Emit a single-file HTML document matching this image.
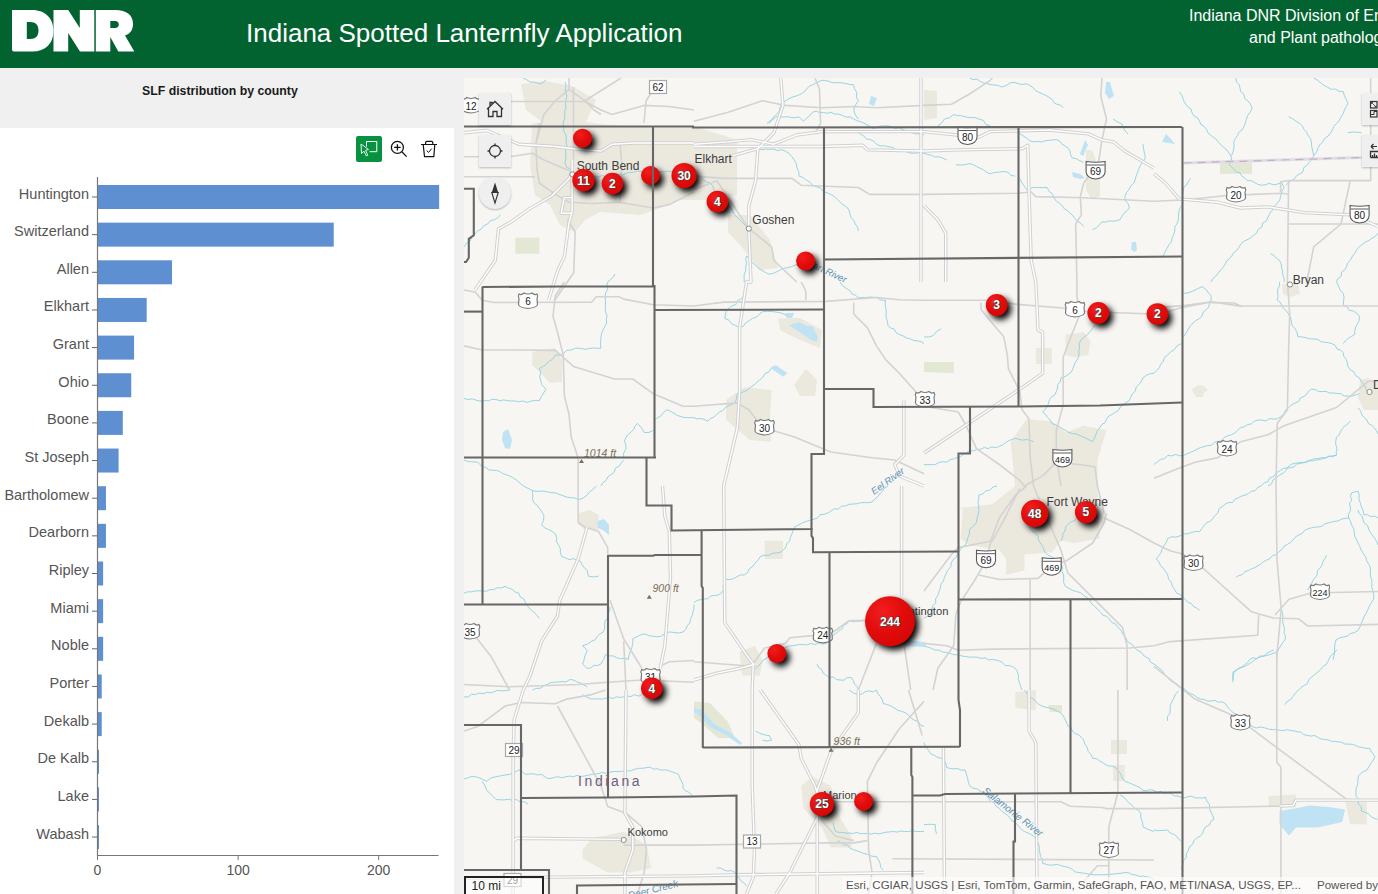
<!DOCTYPE html>
<html><head><meta charset="utf-8">
<style>
*{margin:0;padding:0;box-sizing:border-box}
html,body{width:1378px;height:894px;overflow:hidden;background:#f0f0f0;font-family:"Liberation Sans",sans-serif}
#hdr{position:absolute;left:0;top:0;width:1378px;height:68px;background:#036330;color:#fff}
#title{position:absolute;left:246px;top:17.8px;font-size:26px;white-space:nowrap}
.hr{position:absolute;font-size:16px;white-space:nowrap}
#ptitle{position:absolute;left:142px;top:83.5px;font-size:12.3px;font-weight:bold;color:#1a1a1a;white-space:nowrap}
#panel{position:absolute;left:0;top:128px;width:454px;height:766px;background:#fff}
#map{position:absolute;left:464px;top:78px;width:914px;height:816px;overflow:hidden;background:#f5f4ef}
.lbl{position:absolute;font-size:14.5px;color:#555;white-space:nowrap;text-align:right;width:90px;left:-1px}
.ax{position:absolute;font-size:14px;color:#555;white-space:nowrap}
.btn{position:absolute;width:32px;height:32px;background:#efefef;box-shadow:0 1px 2px rgba(0,0,0,.25)}
</style></head><body>
<div id="hdr">
  <svg style="position:absolute;left:12px;top:10px" width="124" height="43" viewBox="0 0 124 43">
    <g fill="#fff">
      <path d="M0,0 L20,0 C34,0 41.5,9 41.5,20.8 C41.5,33 34,41.6 20,41.6 L2,41.6 Q0,41.6 0,39.6 Z M14.8,11.9 L14.8,29 L18,29 C24,29 26.5,25.5 26.5,20.5 C26.5,15 24,11.9 18,11.9 Z" fill-rule="evenodd"/>
      <path d="M41.5,0 L56.2,0 L67.8,18 L67.8,0 L82.3,0 L82.3,41.6 L68,41.6 L56.2,23 L56.2,41.6 L41.5,41.6 Z"/>
      <path d="M83.8,0 L103,0 C115,0 121,5.5 121,14 C121,20 118,24 113,25.5 L122.3,41.6 L106.3,41.6 L98.3,27 L98.3,41.6 L83.8,41.6 Z M98.3,11 L98.3,18 L103,18 C105.5,18 106.8,16.8 106.8,14.5 C106.8,12.2 105.5,11 103,11 Z" fill-rule="evenodd"/>
    </g>
  </svg>
  <div id="title">Indiana Spotted Lanternfly Application</div>
  <div class="hr" style="left:1189px;top:7.2px">Indiana DNR Division of Entomology</div>
  <div class="hr" style="left:1249px;top:29.2px">and Plant pathology</div>
</div>
<div id="ptitle">SLF distribution by county</div>
<div id="panel"></div>
<div style="position:absolute;left:356px;top:136px;width:26px;height:26px;background:#06923f;border-radius:2px"></div>
<svg style="position:absolute;left:350px;top:130px" width="95" height="38" viewBox="350 130 95 38">
 <path d="M366.5,146.5 V141.5 H376.8 V151.7 H369.5" fill="none" stroke="#fff" stroke-width="1"/>
 <path d="M361,144 L368.5,149.5 L365.6,150.4 L367.8,155.2 L366.2,155.9 L364,151.2 L361.5,153.5 Z" fill="none" stroke="#fff" stroke-width="0.9" stroke-linejoin="round"/>
 <circle cx="397.4" cy="147.4" r="6" fill="none" stroke="#111" stroke-width="1.3"/>
 <path d="M394.2,147.4 H400.6 M397.4,144.2 V150.6 M401.8,151.8 L406.6,156.6" stroke="#111" stroke-width="1.3" fill="none"/>
 <path d="M421,144.5 H437 M425.6,144.5 V142.5 Q425.6,141.3 427,141.3 H431.5 Q432.8,141.3 432.8,142.5 V144.5 M423.2,144.5 L424.5,156.6 H433.8 L434.8,144.5" fill="none" stroke="#111" stroke-width="1.2" stroke-linejoin="round"/>
 <path d="M426.6,150.5 L428.6,152.4 L431.7,148.6" fill="none" stroke="#111" stroke-width="1"/>
</svg>
<div id="chart" style="position:absolute;left:0;top:0;width:454px;height:894px">
<svg style="position:absolute;left:0;top:0" width="454" height="894">
<rect x="97.5" y="185.00" width="341.66" height="24" fill="#5e8fd0"/>
<line x1="92" y1="197.00" x2="97.5" y2="197.00" stroke="#666" stroke-width="1"/>
<rect x="97.5" y="222.65" width="236.21" height="24" fill="#5e8fd0"/>
<line x1="92" y1="234.65" x2="97.5" y2="234.65" stroke="#666" stroke-width="1"/>
<rect x="97.5" y="260.30" width="74.52" height="24" fill="#5e8fd0"/>
<line x1="92" y1="272.30" x2="97.5" y2="272.30" stroke="#666" stroke-width="1"/>
<rect x="97.5" y="297.95" width="49.21" height="24" fill="#5e8fd0"/>
<line x1="92" y1="309.95" x2="97.5" y2="309.95" stroke="#666" stroke-width="1"/>
<rect x="97.5" y="335.60" width="36.56" height="24" fill="#5e8fd0"/>
<line x1="92" y1="347.60" x2="97.5" y2="347.60" stroke="#666" stroke-width="1"/>
<rect x="97.5" y="373.25" width="33.74" height="24" fill="#5e8fd0"/>
<line x1="92" y1="385.25" x2="97.5" y2="385.25" stroke="#666" stroke-width="1"/>
<rect x="97.5" y="410.90" width="25.31" height="24" fill="#5e8fd0"/>
<line x1="92" y1="422.90" x2="97.5" y2="422.90" stroke="#666" stroke-width="1"/>
<rect x="97.5" y="448.55" width="21.09" height="24" fill="#5e8fd0"/>
<line x1="92" y1="460.55" x2="97.5" y2="460.55" stroke="#666" stroke-width="1"/>
<rect x="97.5" y="486.20" width="8.44" height="24" fill="#5e8fd0"/>
<line x1="92" y1="498.20" x2="97.5" y2="498.20" stroke="#666" stroke-width="1"/>
<rect x="97.5" y="523.85" width="8.44" height="24" fill="#5e8fd0"/>
<line x1="92" y1="535.85" x2="97.5" y2="535.85" stroke="#666" stroke-width="1"/>
<rect x="97.5" y="561.50" width="5.62" height="24" fill="#5e8fd0"/>
<line x1="92" y1="573.50" x2="97.5" y2="573.50" stroke="#666" stroke-width="1"/>
<rect x="97.5" y="599.15" width="5.62" height="24" fill="#5e8fd0"/>
<line x1="92" y1="611.15" x2="97.5" y2="611.15" stroke="#666" stroke-width="1"/>
<rect x="97.5" y="636.80" width="5.62" height="24" fill="#5e8fd0"/>
<line x1="92" y1="648.80" x2="97.5" y2="648.80" stroke="#666" stroke-width="1"/>
<rect x="97.5" y="674.45" width="4.22" height="24" fill="#5e8fd0"/>
<line x1="92" y1="686.45" x2="97.5" y2="686.45" stroke="#666" stroke-width="1"/>
<rect x="97.5" y="712.10" width="4.22" height="24" fill="#5e8fd0"/>
<line x1="92" y1="724.10" x2="97.5" y2="724.10" stroke="#666" stroke-width="1"/>
<rect x="97.5" y="749.75" width="1.50" height="24" fill="#5e8fd0"/>
<line x1="92" y1="761.75" x2="97.5" y2="761.75" stroke="#666" stroke-width="1"/>
<rect x="97.5" y="787.40" width="1.50" height="24" fill="#5e8fd0"/>
<line x1="92" y1="799.40" x2="97.5" y2="799.40" stroke="#666" stroke-width="1"/>
<rect x="97.5" y="825.05" width="1.50" height="24" fill="#5e8fd0"/>
<line x1="92" y1="837.05" x2="97.5" y2="837.05" stroke="#666" stroke-width="1"/>
<line x1="97.5" y1="177" x2="97.5" y2="856" stroke="#777" stroke-width="1.2"/>
<line x1="97" y1="855.5" x2="438.5" y2="855.5" stroke="#777" stroke-width="1.2"/>
<line x1="97.5" y1="855" x2="97.5" y2="860" stroke="#777" stroke-width="1"/>
<line x1="238.1" y1="855" x2="238.1" y2="860" stroke="#777" stroke-width="1"/>
<line x1="378.7" y1="855" x2="378.7" y2="860" stroke="#777" stroke-width="1"/>
</svg>
<div class="lbl" style="top:185.50px">Huntington</div>
<div class="lbl" style="top:223.15px">Switzerland</div>
<div class="lbl" style="top:260.80px">Allen</div>
<div class="lbl" style="top:298.45px">Elkhart</div>
<div class="lbl" style="top:336.10px">Grant</div>
<div class="lbl" style="top:373.75px">Ohio</div>
<div class="lbl" style="top:411.40px">Boone</div>
<div class="lbl" style="top:449.05px">St Joseph</div>
<div class="lbl" style="top:486.70px">Bartholomew</div>
<div class="lbl" style="top:524.35px">Dearborn</div>
<div class="lbl" style="top:562.00px">Ripley</div>
<div class="lbl" style="top:599.65px">Miami</div>
<div class="lbl" style="top:637.30px">Noble</div>
<div class="lbl" style="top:674.95px">Porter</div>
<div class="lbl" style="top:712.60px">Dekalb</div>
<div class="lbl" style="top:750.25px">De Kalb</div>
<div class="lbl" style="top:787.90px">Lake</div>
<div class="lbl" style="top:825.55px">Wabash</div>
<div class="ax" style="left:67.5px;width:60px;text-align:center;top:862px">0</div>
<div class="ax" style="left:208.1px;width:60px;text-align:center;top:862px">100</div>
<div class="ax" style="left:348.7px;width:60px;text-align:center;top:862px">200</div>
</div>
<div id="map"><svg width="914" height="816" viewBox="464 78 914 816" style="position:absolute;left:0;top:0" font-family="Liberation Sans">
<defs><radialGradient id="rg" cx="0.35" cy="0.3" r="0.75"><stop offset="0" stop-color="#f21d1d"/><stop offset="0.55" stop-color="#e20c0c"/><stop offset="1" stop-color="#d60707"/></radialGradient><filter id="sh" x="-50%" y="-50%" width="200%" height="200%"><feGaussianBlur stdDeviation="3.3"/></filter></defs>
<rect x="464" y="78" width="914" height="816" fill="#f7f6f2"/>
<path d="M532.0,124.0 L560.0,118.0 L600.0,124.0 L655.0,128.0 L655.0,210.0 L640.0,215.0 L600.0,212.0 L585.0,220.0 L575.0,232.0 L560.0,225.0 L550.0,205.0 L535.0,195.0 L530.0,165.0Z" fill="#ebe8de"/>
<path d="M521.0,84.0 L545.0,81.0 L572.0,86.0 L596.0,100.0 L585.0,124.0 L545.0,124.0 L526.0,110.0Z" fill="#ebe8de"/>
<path d="M655.0,128.0 L700.0,128.0 L737.0,140.0 L737.0,195.0 L710.0,200.0 L680.0,200.0 L655.0,210.0Z" fill="#ebe8de"/>
<path d="M728.0,215.0 L750.0,215.0 L770.0,240.0 L778.0,268.0 L760.0,270.0 L740.0,245.0 L728.0,232.0Z" fill="#ebe8de"/>
<path d="M1086.0,150.0 L1092.0,150.0 L1100.0,170.0 L1100.0,196.0 L1092.0,200.0 L1086.0,190.0Z" fill="#ebe8de"/>
<path d="M924.0,90.0 L937.0,91.0 L937.0,118.0 L924.0,120.0Z" fill="#ebe8de"/>
<path d="M532.5,352.0 L555.0,348.0 L562.0,360.0 L562.0,382.0 L550.0,383.0 L540.0,372.0 L532.0,365.0Z" fill="#ebe8de"/>
<path d="M726.0,400.0 L745.0,387.0 L771.6,390.0 L770.0,420.0 L771.0,441.7 L750.0,440.0 L726.0,420.0Z" fill="#ebe8de"/>
<path d="M778.0,318.5 L800.0,318.0 L822.0,330.0 L820.0,348.0 L800.0,340.0 L780.0,330.0Z" fill="#ebe8de"/>
<path d="M794.0,385.0 L806.0,368.7 L817.0,380.0 L815.0,396.0 L800.0,396.0Z" fill="#ebe8de"/>
<path d="M1065.5,334.5 L1083.7,332.2 L1090.6,341.3 L1088.3,355.0 L1074.6,357.3 L1065.5,355.0Z" fill="#ebe8de"/>
<path d="M1035.8,348.0 L1051.8,348.0 L1051.8,364.0 L1035.8,364.0Z" fill="#ebe8de"/>
<path d="M1010.7,441.7 L1026.7,418.9 L1051.8,421.2 L1065.5,432.6 L1083.7,425.7 L1106.5,430.3 L1097.4,460.0 L1097.4,488.3 L1099.7,538.5 L1074.6,543.0 L1060.9,540.8 L1051.8,552.2 L1024.4,554.4 L1024.4,570.4 L1006.1,575.0 L1006.1,559.0 L999.3,549.9 L969.6,545.3 L960.5,538.5 L962.8,508.8 L953.7,508.8 L992.4,504.3 L1015.0,486.0Z" fill="#ebe8de"/>
<path d="M1192.0,389.0 L1198.0,385.0 L1204.0,386.0 L1208.0,390.0 L1204.0,393.0 L1203.0,397.0 L1196.0,397.0 L1193.0,392.0Z" fill="#ebe8de"/>
<path d="M1282.0,284.0 L1298.0,283.0 L1300.0,294.0 L1290.0,297.0 L1283.0,294.0Z" fill="#ebe8de"/>
<path d="M1360.0,380.0 L1368.0,378.0 L1378.0,382.0 L1378.0,410.0 L1364.0,410.0 L1358.0,398.0Z" fill="#ebe8de"/>
<path d="M579.0,513.0 L590.0,510.0 L598.6,515.0 L598.6,529.4 L585.0,529.4 L579.0,525.0Z" fill="#ebe8de"/>
<path d="M764.7,540.8 L783.0,540.8 L783.0,559.0 L764.7,559.0Z" fill="#ebe8de"/>
<path d="M739.6,652.0 L755.0,645.7 L762.4,660.0 L760.0,675.4 L742.0,675.4Z" fill="#ebe8de"/>
<path d="M582.6,849.7 L591.8,838.3 L623.7,831.5 L646.5,845.1 L651.1,868.0 L630.6,872.5 L607.7,872.5 L582.6,858.8Z" fill="#ebe8de"/>
<path d="M801.2,785.8 L812.6,776.7 L830.9,785.8 L835.4,804.1 L840.0,817.8 L851.4,836.0 L851.4,847.4 L830.9,847.4 L821.8,826.9 L803.5,808.6Z" fill="#ebe8de"/>
<path d="M1015.3,692.0 L1035.8,690.0 L1035.8,710.5 L1015.3,708.0Z" fill="#ebe8de"/>
<path d="M1111.0,740.0 L1127.0,740.0 L1127.0,754.0 L1111.0,754.0Z" fill="#ebe8de"/>
<path d="M1113.0,765.0 L1124.8,765.0 L1124.8,781.0 L1113.0,781.0Z" fill="#ebe8de"/>
<path d="M1268.6,796.0 L1295.9,794.6 L1295.9,806.9 L1268.6,806.9Z" fill="#ebe8de"/>
<path d="M1345.0,800.0 L1366.8,802.0 L1366.8,824.6 L1350.0,824.0Z" fill="#ebe8de"/>
<path d="M515.3,237.7 L539.3,237.7 L539.3,253.7 L515.3,253.7Z" fill="#e2e8d4"/>
<path d="M1220.0,162.4 L1252.0,162.4 L1252.0,173.8 L1220.0,173.8Z" fill="#e2e8d4"/>
<path d="M924.0,361.9 L953.7,361.9 L953.7,373.3 L924.0,372.0Z" fill="#e2e8d4"/>
<path d="M694.0,701.4 L710.0,703.0 L728.0,722.0 L735.0,738.0 L718.0,738.0 L700.0,722.0 L694.0,718.0Z" fill="#e2e8d4"/>
<path d="M1048.0,705.0 L1062.0,705.0 L1062.0,712.0 L1050.0,712.0Z" fill="#e2e8d4"/>
<path d="M871.0,96.0 L877.0,98.0 L874.0,106.0 L869.0,104.0Z" fill="#bfe3f5"/>
<path d="M1106.0,82.0 L1110.0,82.0 L1114.0,96.0 L1109.0,99.0 L1105.0,93.0Z" fill="#bfe3f5"/>
<path d="M1085.0,140.0 L1088.0,145.0 L1083.0,156.0 L1080.0,154.0Z" fill="#bfe3f5"/>
<path d="M1072.0,172.0 L1080.0,174.0 L1085.0,178.0 L1080.0,179.0 L1073.0,177.0Z" fill="#bfe3f5"/>
<path d="M1132.0,242.0 L1136.0,242.0 L1137.0,250.0 L1134.0,252.0 L1131.0,249.0Z" fill="#bfe3f5"/>
<path d="M1162.0,142.0 L1166.0,134.0 L1170.0,138.0 L1175.0,144.0Z" fill="#bfe3f5"/>
<path d="M503.0,432.0 L508.0,429.0 L512.0,440.0 L510.0,449.0 L505.0,448.0 L502.0,440.0Z" fill="#bfe3f5"/>
<path d="M789.0,325.3 L799.0,322.0 L807.0,326.0 L812.0,326.0 L818.0,337.0 L817.0,342.0 L811.0,340.0 L801.0,333.0Z" fill="#bfe3f5"/>
<path d="M771.6,366.4 L776.1,365.3 L787.5,373.3 L783.0,376.7 L771.6,368.7Z" fill="#bfe3f5"/>
<path d="M785.0,313.0 L794.0,313.0 L792.0,318.0 L787.0,318.0Z" fill="#bfe3f5"/>
<path d="M597.5,521.0 L604.0,519.0 L609.0,525.0 L608.9,535.0 L603.0,530.0 L598.0,528.0Z" fill="#bfe3f5"/>
<path d="M903.0,640.0 L924.0,642.0 L926.0,647.0 L905.0,646.0Z" fill="#bfe3f5"/>
<path d="M694.0,708.0 L702.0,710.0 L714.0,724.0 L728.0,731.0 L742.0,743.0 L740.0,745.0 L726.0,735.0 L710.0,727.0 L698.0,714.0 L694.0,712.0Z" fill="#bfe3f5"/>
<path d="M1279.5,811.0 L1295.9,808.3 L1309.5,805.5 L1328.6,806.9 L1345.0,809.6 L1342.3,821.9 L1317.7,827.4 L1295.9,827.4 L1289.1,835.5 L1279.5,824.6Z" fill="#bfe3f5"/>
<g fill="none" stroke="#8bd0e2" stroke-width="0.9" stroke-linejoin="round">
<path d="M523.0,78.0 L526.7,79.7 L530.0,82.0 L535.2,82.2 L540.0,84.0 L543.2,82.3 L546.0,80.0"/>
<path d="M565.0,82.0 L566.1,85.5 L565.3,89.2 L565.9,92.8 L566.8,96.3 L566.0,100.0 L565.5,103.8 L566.0,107.8 L564.6,111.5 L564.9,115.5 L564.4,119.3 L563.0,123.0 L563.8,126.8 L563.6,130.8 L565.8,134.4 L566.3,138.2 L566.1,142.2 L567.0,146.0 L565.5,150.1 L565.8,154.5 L565.7,158.8 L565.0,163.0 L566.5,166.9 L570.5,169.1 L572.0,173.0 L575.6,174.6 L579.7,174.1 L583.6,174.6 L587.4,175.4 L591.0,177.0 L594.5,176.4 L598.2,177.2 L601.6,175.6 L605.2,176.3 L608.8,176.2 L612.3,175.4 L615.9,175.5 L619.4,174.3 L623.0,175.0 L626.2,173.1 L629.8,172.4 L633.6,172.4 L637.0,171.0 L641.0,171.3 L645.1,171.6 L649.0,172.7 L653.0,173.0 L656.7,172.4 L660.4,171.6 L664.3,172.1 L668.0,171.0 L671.7,171.6 L675.5,170.7 L679.1,171.6 L682.9,171.6 L686.5,172.5 L690.3,172.4 L694.0,172.0"/>
<path d="M464.0,246.8 L466.4,243.3 L470.3,241.1 L471.6,236.7 L474.8,234.0 L477.7,230.9 L481.3,229.1 L483.8,225.7 L487.5,224.0 L490.1,220.9 L494.2,219.8 L497.6,217.7 L500.5,214.9"/>
<path d="M608.0,282.0 L610.5,279.4 L613.3,277.2 L615.0,274.0"/>
<path d="M767.0,123.6 L769.8,121.0 L773.3,119.4 L776.1,116.8 L779.9,117.0 L783.7,117.0 L787.5,116.7 L791.4,117.5 L795.2,117.8 L799.0,116.8 L803.5,121.3 L806.5,118.2 L809.8,115.5 L812.6,112.2 L816.3,111.2 L819.9,112.6 L823.6,112.5 L827.2,113.3 L830.9,112.2 L834.5,114.0 L838.6,114.0 L842.4,115.4 L846.0,117.1 L850.2,116.9 L853.7,119.0 L857.4,120.8 L861.3,122.0 L865.0,123.8 L868.7,125.5 L871.9,128.2 L876.0,128.2 L879.8,126.2 L883.8,125.9 L887.9,125.9 L891.6,126.6 L894.9,128.5 L899.0,127.7 L902.4,129.4 L905.9,130.6 L909.4,132.2 L913.0,133.0 L916.6,134.0 L920.5,133.6 L924.0,135.0"/>
<path d="M769.3,123.6 L771.4,120.2 L773.6,116.9 L776.8,114.3 L779.3,111.1 L780.1,106.9 L782.4,103.6 L785.3,100.8 L789.0,98.6 L793.0,96.9 L797.2,95.7 L801.2,94.0 L804.2,91.9 L806.6,89.0 L809.1,86.3 L812.6,84.8 L817.1,82.4 L821.8,80.3 L825.5,80.5 L829.1,81.4 L832.6,82.7 L836.3,82.6 L840.0,82.6 L844.6,83.4 L849.1,84.3 L853.7,84.8 L854.5,88.9 L856.9,92.5 L856.3,97.0 L858.3,100.8 L855.4,105.1 L853.7,110.0 L855.3,114.9 L858.3,119.0"/>
<path d="M757.9,148.7 L761.8,149.7 L765.7,149.1 L769.7,149.5 L773.6,149.1 L777.4,150.6 L781.5,149.7 L785.3,151.0 L789.0,153.4 L791.8,156.6 L794.4,160.1 L796.3,163.9 L797.0,168.0 L798.8,171.8 L799.0,176.1 L803.0,177.5 L806.2,180.0 L809.7,182.2 L812.6,185.2 L816.4,186.8 L820.4,187.9 L823.2,191.5 L827.1,192.8 L830.9,194.4 L834.4,196.5 L837.3,199.3 L840.2,202.1 L843.2,204.8 L846.6,207.0 L849.1,210.3 L849.9,214.0 L851.2,217.6 L853.8,220.6 L855.3,224.0 L857.6,227.1 L858.3,230.9"/>
<path d="M853.7,130.5 L857.4,131.7 L860.4,134.1 L863.7,135.9 L866.4,138.9 L870.4,139.6 L873.8,141.3 L876.5,144.2 L880.1,145.9 L884.1,145.8 L887.9,146.5 L892.0,147.3 L895.5,149.6 L899.3,151.0 L902.9,150.3 L906.4,151.7 L909.8,153.0 L913.3,153.1 L916.9,153.1 L920.5,152.4 L924.0,153.3"/>
<path d="M744.2,282.0 L744.2,278.3 L744.1,274.5 L745.8,270.9 L745.6,267.1 L746.5,263.5 L745.8,259.7 L746.5,256.0 L750.0,258.6 L752.1,262.6 L755.6,265.1 L758.4,268.3 L762.0,270.3 L765.5,272.5 L769.3,274.2 L773.4,273.3 L777.1,271.6 L780.7,269.6 L784.2,268.1 L788.0,267.8 L791.6,266.6 L795.1,265.0 L799.0,265.1 L801.8,261.9 L805.8,260.5"/>
<path d="M694.0,173.8 L697.4,175.2 L700.7,177.0 L703.4,179.7 L706.3,182.0 L710.0,183.0 L712.4,185.7 L713.8,189.2 L716.0,192.1 L718.3,194.9 L721.6,196.9 L724.1,199.5 L726.4,202.3 L728.7,205.0 L731.0,207.9 L732.6,211.2 L734.4,214.4 L736.7,217.2 L739.6,219.5 L742.7,222.5 L745.5,225.8 L748.8,228.6"/>
<path d="M969.6,78.0 L973.0,79.6 L977.0,79.1 L980.2,81.4 L983.6,82.9 L987.2,83.7 L990.8,84.6 L994.5,85.0 L998.2,85.4 L1001.6,87.1 L1006.4,85.4 L1010.7,82.6 L1014.7,82.5 L1018.7,83.8 L1022.6,84.5 L1026.7,83.7 L1030.0,85.6 L1033.2,87.6 L1035.7,90.7 L1039.2,92.4 L1042.6,94.0 L1045.9,95.4 L1048.9,97.2 L1051.9,99.2 L1053.9,102.6 L1056.9,104.3 L1060.7,105.1 L1063.2,107.7"/>
<path d="M937.7,125.9 L941.6,123.0 L944.5,119.0 L949.6,117.7 L953.7,114.5 L957.4,115.6 L961.3,115.7 L965.0,116.8 L969.6,117.6 L974.3,117.5 L978.8,119.0 L983.2,120.4 L985.9,124.5 L990.2,125.9"/>
<path d="M924.0,153.3 L927.6,154.5 L931.3,155.2 L934.7,157.0 L938.7,156.8 L942.3,157.9 L946.8,160.1"/>
<path d="M956.0,164.7 L960.6,165.1 L965.1,164.7 L969.6,163.6 L973.3,164.7 L976.7,166.5 L980.1,168.3 L983.6,169.9 L986.7,172.3 L990.2,173.8 L994.6,172.5 L999.2,172.1 L1003.8,171.5 L1007.9,172.3 L1011.1,175.4 L1015.3,176.1"/>
<path d="M1017.5,132.8 L1020.9,134.3 L1023.9,136.4 L1027.0,138.4 L1029.9,140.9 L1033.5,141.9 L1037.3,141.3 L1041.2,142.0 L1044.9,140.8 L1048.7,140.4 L1052.5,140.0 L1056.3,139.6 L1059.7,141.1 L1061.9,144.1 L1065.0,145.9 L1068.0,147.9 L1070.0,151.0 L1070.5,154.7 L1072.3,157.9 L1076.4,158.7 L1079.9,160.8 L1083.7,162.4"/>
<path d="M1019.8,178.4 L1021.7,182.5 L1024.3,186.1 L1026.7,189.8 L1030.0,188.3 L1033.5,187.5 L1038.1,187.5 L1042.6,187.6 L1047.2,187.5 L1049.0,191.3 L1052.5,193.9 L1053.9,197.8 L1056.3,201.2 L1059.3,203.1 L1062.0,205.4 L1063.9,208.5 L1067.0,210.3 L1069.5,212.7 L1072.3,214.9 L1074.7,218.2 L1077.4,221.2 L1080.9,223.4 L1083.7,226.3"/>
<path d="M1143.0,144.2 L1143.5,148.8 L1144.5,153.3 L1145.3,157.9 L1143.0,161.7 L1140.4,165.3 L1138.5,169.3 L1137.4,172.8 L1136.1,176.1 L1135.1,179.6 L1133.9,183.0 L1130.8,185.9 L1129.0,189.6 L1126.4,192.7 L1124.8,196.6 L1125.4,200.8 L1128.3,204.0 L1129.3,208.0 L1126.9,210.8 L1124.0,213.1 L1121.9,216.2 L1120.2,219.5 L1116.7,220.7 L1113.0,221.2 L1109.3,220.9 L1105.8,222.2 L1102.0,221.7 L1099.3,224.8 L1096.5,227.7 L1092.8,229.7"/>
<path d="M1113.0,119.0 L1117.3,121.8 L1122.0,124.0 L1123.5,127.7 L1125.3,131.1 L1128.0,134.0"/>
<path d="M1179.1,91.7 L1182.1,95.9 L1183.7,100.8 L1185.6,104.0 L1188.0,106.9 L1191.1,109.1 L1192.1,113.0 L1194.2,116.1 L1197.8,118.0 L1199.6,121.3 L1201.1,124.6 L1204.3,126.5 L1206.5,129.3 L1207.9,132.7 L1210.5,135.1 L1213.3,137.3 L1216.5,139.4 L1218.7,142.5 L1221.3,145.3 L1224.2,147.7 L1227.1,150.2 L1229.3,153.3 L1231.6,157.8 L1230.8,161.4 L1229.3,164.7 L1233.8,169.2 L1236.2,171.9 L1240.0,172.9 L1241.9,176.1 L1244.8,178.2 L1247.5,180.6 L1251.3,180.7 L1254.5,182.5 L1257.7,184.3 L1261.2,185.2 L1265.3,184.8 L1269.3,183.3 L1273.6,184.9 L1277.7,184.0 L1281.7,182.9 L1284.0,187.5"/>
<path d="M1236.1,78.0 L1236.3,81.8 L1239.2,84.6 L1240.0,88.1 L1240.7,91.7 L1243.8,94.3 L1244.8,98.5 L1248.0,101.0 L1250.5,104.0 L1252.1,107.7 L1250.5,111.7 L1247.8,115.3 L1246.3,119.3 L1245.2,123.6 L1243.8,126.9 L1242.1,130.1 L1238.7,132.3 L1237.5,135.7 L1235.3,138.6 L1233.8,141.9 L1234.0,146.6 L1233.3,151.2 L1231.6,155.6"/>
<path d="M1284.0,187.5 L1281.9,191.3 L1280.8,195.6 L1279.8,199.9 L1277.2,203.5 L1274.1,206.4 L1272.4,210.1 L1269.8,213.3 L1268.0,217.1 L1266.5,220.8 L1262.8,223.0 L1261.9,227.3 L1258.2,229.4 L1256.6,233.1 L1253.5,235.5 L1250.4,237.9 L1247.0,239.8 L1243.3,241.5 L1240.7,244.5 L1238.8,247.5 L1236.8,250.4 L1233.8,252.5 L1232.0,255.5 L1229.9,258.4 L1227.0,260.5 L1225.3,264.0 L1223.2,267.2 L1220.7,270.1 L1218.2,273.0 L1215.9,276.1 L1212.8,278.6 L1211.0,282.0"/>
<path d="M1288.6,116.8 L1292.6,118.7 L1296.2,121.3 L1300.0,123.6 L1302.5,126.3 L1304.1,129.5 L1306.6,132.2 L1308.1,135.5 L1310.4,138.3 L1311.4,141.9 L1311.7,146.6 L1312.8,151.1 L1313.7,155.6 L1312.0,159.4 L1309.1,162.4 L1306.9,165.3 L1303.8,167.5 L1303.0,171.5 L1300.0,173.8 L1296.8,175.5 L1294.6,178.5 L1291.8,180.6 L1288.6,182.4 L1286.3,185.2"/>
<path d="M1313.7,78.0 L1317.3,80.1 L1320.5,82.6 L1323.7,85.2 L1327.4,87.1 L1331.1,89.3 L1335.4,89.1 L1339.1,91.3 L1343.3,91.7 L1344.4,95.7 L1346.1,99.4 L1347.9,103.1 L1346.2,106.6 L1344.4,110.1 L1343.1,113.8 L1341.0,117.2 L1339.2,120.6 L1336.5,123.6 L1333.8,126.3 L1332.4,130.0 L1330.2,133.2 L1328.1,136.3 L1324.5,138.4 L1322.8,141.9 L1319.8,144.9 L1317.9,148.5 L1316.4,152.4 L1313.7,155.6"/>
<path d="M1347.9,132.7 L1352.5,132.1 L1357.0,132.2 L1361.6,132.7"/>
<path d="M1190.5,178.4 L1188.3,181.5 L1186.6,184.9 L1183.7,187.5 L1183.1,191.3 L1182.7,195.2 L1181.4,198.9"/>
<path d="M1181.4,205.7 L1179.5,209.1 L1178.6,212.8 L1178.5,216.7 L1178.3,220.5 L1176.8,224.0 L1174.7,227.1 L1174.9,231.0 L1173.6,234.4 L1172.2,237.7 L1171.4,241.8 L1168.8,245.1 L1166.8,248.6 L1164.9,252.3 L1163.1,255.9"/>
<path d="M1270.3,253.6 L1273.8,255.4 L1276.4,258.2 L1279.5,260.5 L1281.3,263.9 L1281.5,267.6 L1282.6,271.1 L1282.7,274.8 L1284.2,278.2 L1284.0,282.0"/>
<path d="M1378.0,233.1 L1375.5,236.2 L1372.0,238.0 L1369.0,240.4 L1365.4,242.1 L1362.4,244.5 L1359.3,246.8 L1356.6,249.9 L1354.5,253.5 L1352.1,256.8 L1350.2,260.5 L1347.5,263.1 L1346.5,266.8 L1344.7,269.9 L1341.5,272.2 L1341.1,276.3 L1338.0,278.7 L1336.5,282.0"/>
<path d="M607.7,282.0 L606.9,285.6 L607.8,289.4 L605.6,292.9 L605.1,296.5 L605.5,300.3 L605.4,304.1 L605.4,307.9 L605.4,311.7 L607.0,315.5 L606.4,319.3 L606.6,323.1 L604.3,327.6 L602.0,332.2 L601.0,336.1 L600.8,340.2 L600.5,344.2 L600.9,348.2 L596.9,348.3 L592.8,347.9 L588.9,348.6 L584.9,349.3 L580.4,348.3 L575.8,348.2 L571.4,349.9 L566.7,350.4 L562.1,355.0 L555.3,355.0 L552.6,359.2 L548.4,361.9 L545.8,364.8 L542.5,366.7 L539.3,368.7 L540.7,372.6 L539.7,376.8 L540.9,380.7 L541.6,384.7 L546.1,389.2 L543.6,392.9 L541.3,396.7 L539.3,400.6 L535.2,400.4 L531.1,401.1 L527.1,402.4 L522.9,400.9 L518.8,401.8 L515.1,400.9 L511.2,401.0 L507.4,400.6 L503.6,399.9 L499.7,400.8 L496.0,399.5 L492.1,399.3 L488.4,400.8 L484.5,400.6 L480.3,401.1 L476.2,400.2 L472.3,398.8 L468.0,399.5 L464.0,398.4"/>
<path d="M654.0,420.0 L657.6,417.9 L661.1,415.7 L663.7,412.3 L667.0,409.8 L670.5,411.3 L673.9,413.2 L677.1,415.3 L680.7,416.6 L685.1,417.6 L689.5,417.6 L694.0,417.7 L697.3,418.9 L701.1,418.5 L704.5,419.6 L707.7,421.2 L710.4,418.5 L714.1,417.0 L716.8,414.3 L719.6,412.0 L722.9,410.6 L725.3,407.7 L728.4,405.9 L731.7,404.4 L735.0,402.9 L736.5,398.4 L737.3,393.8 L741.3,392.7 L745.1,391.1 L748.8,389.2 L751.2,386.6 L754.3,384.7 L756.9,382.3 L759.6,380.0 L762.4,377.8 L764.8,373.8 L769.2,371.6 L771.6,367.6"/>
<path d="M623.7,457.7 L623.5,453.5 L625.7,449.6 L626.0,445.4 L624.5,441.1 L626.0,437.1 L628.2,434.3 L631.1,432.1 L633.6,429.6 L635.0,426.1 L637.4,423.5 L640.1,426.2 L642.4,429.2 L644.2,432.6 L649.0,432.4 L653.4,430.3"/>
<path d="M600.9,486.0 L603.0,482.7 L606.1,480.3 L607.9,476.8 L611.1,474.5 L614.3,472.2 L615.5,468.1 L619.2,466.2 L621.2,462.9 L623.7,460.0"/>
<path d="M464.0,460.0 L468.4,461.6 L473.1,461.9 L477.7,462.2 L482.3,466.8 L485.9,467.4 L488.8,469.9 L492.5,470.2 L496.3,470.4 L499.7,471.5 L502.8,473.6 L506.2,474.7 L509.6,475.9 L513.3,478.1 L516.9,480.3 L520.1,483.2 L523.3,486.0"/>
<path d="M744.2,295.7 L741.4,298.7 L737.6,300.5 L735.8,304.5 L731.7,306.0 L728.5,308.5 L726.0,311.7 L724.8,318.5 L728.9,320.1 L731.7,323.8 L735.7,325.7 L739.6,327.6 L743.4,326.1 L745.8,322.7 L749.2,320.6 L752.5,318.3 L756.5,317.1 L759.3,314.1 L762.4,311.7 L766.2,311.4 L770.1,311.5 L773.9,311.7 L777.5,312.4 L781.0,313.0 L784.4,314.2 L787.5,316.2"/>
<path d="M840.0,282.0 L842.9,285.9 L846.9,288.8 L850.0,290.7 L852.0,294.1 L855.8,295.3 L858.3,298.0 L861.9,297.4 L865.6,297.8 L869.2,297.0 L872.9,297.3 L876.5,297.5 L880.8,299.9 L885.6,300.3 L885.1,303.9 L885.6,307.5 L886.3,311.0 L886.0,314.7 L886.3,318.2 L887.5,321.7 L887.9,325.3 L890.4,328.0 L894.2,329.1 L896.1,332.6 L899.3,334.5 L903.1,335.9 L906.7,338.0 L910.7,339.0 L913.9,340.5 L917.5,340.9 L921.0,341.5 L924.0,343.6"/>
<path d="M924.0,336.8 L928.7,337.1 L933.1,335.6 L936.6,331.6 L941.1,328.8"/>
<path d="M1095.1,325.3 L1092.5,328.4 L1090.0,331.6 L1087.4,334.7 L1084.0,337.2 L1081.0,339.9 L1079.1,343.6 L1079.6,347.4 L1078.8,351.2 L1079.1,355.0 L1077.7,358.9 L1075.3,362.3 L1073.8,366.1 L1072.5,370.0 L1070.0,373.3 L1065.8,376.2 L1060.9,377.8 L1060.4,381.4 L1057.8,384.4 L1057.5,388.1 L1056.3,391.5 L1054.9,394.8 L1051.6,396.9 L1049.5,399.7 L1048.6,403.3 L1047.2,406.6 L1045.1,409.4 L1042.6,412.0 L1045.6,414.3 L1047.5,417.5 L1050.2,420.1 L1051.8,423.5 L1055.5,424.7 L1058.9,426.4 L1062.0,428.7 L1065.5,430.3 L1068.8,432.5 L1072.6,433.5 L1076.5,434.2 L1080.1,435.6 L1083.7,437.1 L1088.2,439.4 L1092.8,441.7 L1094.3,438.2 L1095.9,434.7 L1097.1,431.0 L1099.7,428.0 L1101.6,424.7 L1105.1,422.5 L1106.5,418.9 L1108.8,416.0 L1112.2,414.3 L1115.2,412.3 L1118.4,410.4 L1120.4,407.0 L1123.3,404.8 L1126.1,402.5 L1129.3,400.6 L1130.8,397.1 L1132.6,393.7 L1135.4,390.9 L1136.2,387.0 L1139.1,384.4 L1141.4,381.4 L1143.0,377.8 L1146.3,375.3 L1149.9,373.8 L1154.0,373.3 L1156.7,370.5 L1159.3,367.7 L1160.8,364.1 L1163.3,361.2 L1164.5,357.4 L1167.7,355.0 L1170.6,351.8 L1174.4,349.6 L1176.8,345.9 L1181.4,343.6"/>
<path d="M924.0,464.5 L927.9,464.8 L931.7,464.5 L935.5,464.4 L939.1,462.4 L942.9,461.7 L946.8,462.2 L949.7,459.9 L953.3,459.0 L956.8,457.7 L960.3,456.6 L963.3,454.5 L966.5,452.7 L969.6,450.8 L973.4,450.8 L977.0,449.6 L980.8,449.2 L984.3,447.5 L988.3,448.6 L991.8,446.8 L995.7,447.8 L999.3,446.3 L1002.6,445.0 L1005.5,442.7 L1008.5,440.8 L1011.9,439.4 L1015.3,438.3 L1018.9,439.3 L1022.5,440.1 L1026.4,439.5 L1030.0,440.1 L1033.5,441.7"/>
<path d="M1183.7,336.7 L1186.0,332.9 L1188.4,329.2 L1190.5,325.3 L1193.4,322.8 L1196.2,320.3 L1199.6,318.5 L1202.0,315.8 L1203.3,312.1 L1206.1,309.7 L1208.7,307.1 L1209.4,303.3 L1211.2,299.7 L1211.0,295.7 L1208.2,292.4 L1205.5,289.0 L1201.9,286.6 L1197.4,288.9 L1192.8,291.1 L1188.4,292.8 L1183.7,293.4"/>
<path d="M1279.5,282.0 L1279.6,285.7 L1277.6,289.2 L1277.7,292.9 L1278.1,296.6 L1277.2,300.2 L1280.3,302.3 L1281.8,305.7 L1283.7,308.7 L1286.5,311.1 L1288.6,314.0 L1290.6,317.6 L1291.3,321.7 L1292.3,325.7 L1295.2,328.9 L1297.1,332.5 L1297.7,336.7 L1301.8,336.9 L1305.7,337.7 L1309.6,338.8 L1313.7,339.0 L1317.5,339.3 L1320.8,341.5 L1324.5,342.3 L1328.3,342.7 L1331.9,343.6 L1335.2,345.4 L1337.0,349.0 L1340.7,350.1 L1343.3,352.7 L1343.8,356.3 L1346.2,359.4 L1347.3,362.8 L1347.9,366.4 L1350.3,369.7 L1353.9,371.8 L1355.7,375.7 L1359.3,377.8 L1361.1,381.0 L1363.5,383.9 L1365.3,387.1 L1366.7,390.5 L1368.4,393.8"/>
<path d="M1336.5,282.0 L1338.5,286.0 L1340.2,290.1 L1343.3,293.4 L1344.1,297.2 L1343.5,301.0 L1343.3,304.8 L1346.9,306.6 L1349.1,310.2 L1353.4,311.0 L1356.7,313.1 L1359.3,316.2 L1359.3,320.1 L1357.7,323.6 L1355.7,327.0 L1354.8,330.6 L1354.7,334.5 L1351.5,336.4 L1348.3,338.2 L1345.6,340.6 L1343.3,343.6"/>
<path d="M1154.0,464.5 L1157.2,461.9 L1160.5,459.4 L1164.8,458.5 L1167.7,455.4 L1171.7,455.9 L1175.7,454.4 L1179.7,455.8 L1183.7,455.4 L1187.0,453.8 L1190.4,452.4 L1193.8,450.9 L1197.1,449.2 L1200.4,447.5 L1204.0,446.7 L1207.5,445.5 L1211.4,445.4 L1214.2,442.3 L1217.9,441.7 L1221.7,440.7 L1224.2,437.4 L1227.7,435.8 L1231.5,434.8 L1234.8,433.0 L1237.7,430.3 L1240.6,427.7 L1244.4,426.7 L1247.6,424.6 L1251.5,423.8 L1254.4,421.1 L1258.1,420.1 L1262.0,420.1 L1265.9,420.9 L1269.5,418.6 L1273.4,419.1 L1277.2,418.9 L1280.7,416.7 L1283.7,414.0 L1285.6,410.1 L1288.7,407.5 L1291.7,404.8 L1295.4,402.9 L1298.7,401.3 L1300.4,397.9 L1303.8,396.5 L1306.6,394.4 L1308.5,391.2 L1311.4,389.2 L1315.1,389.4 L1318.5,391.6 L1322.3,391.5 L1326.1,391.4 L1329.6,393.1 L1333.4,392.9 L1337.0,393.5 L1340.8,393.6 L1344.1,396.0 L1347.9,396.1 L1351.9,396.2 L1355.6,394.9 L1359.3,393.8"/>
<path d="M1268.0,486.0 L1271.5,484.0 L1273.0,479.9 L1276.2,477.5 L1279.4,475.2 L1283.0,473.3 L1285.9,470.6 L1287.9,467.0 L1290.9,464.5 L1294.3,463.3 L1297.9,462.9 L1301.4,462.4 L1305.1,462.6 L1308.3,460.3 L1312.1,461.0 L1315.6,460.1 L1319.1,459.6 L1322.6,458.8 L1326.0,457.7 L1329.4,456.4 L1332.9,455.7 L1336.5,455.4 L1336.2,451.7 L1337.1,448.1 L1335.6,444.4 L1335.8,440.8 L1336.5,437.1 L1339.2,434.8 L1340.6,431.4 L1342.6,428.5 L1344.9,425.8 L1348.0,423.8 L1350.2,421.1"/>
<path d="M1358.0,408.0 L1360.6,410.8 L1361.7,414.6 L1364.1,417.5 L1367.0,420.0 L1368.4,423.5 L1371.8,425.3 L1374.3,427.8 L1376.5,430.7 L1378.0,434.0"/>
<path d="M523.3,486.0 L527.9,488.3 L532.5,490.6 L536.3,491.4 L540.1,491.2 L544.0,491.1 L547.7,491.9 L551.5,492.7 L555.3,492.8 L559.0,494.3 L562.7,495.6 L566.5,497.0 L570.4,497.7 L574.5,497.8 L578.1,499.7 L583.0,498.1 L587.2,495.1 L589.9,491.7 L593.4,489.1 L596.3,486.0"/>
<path d="M532.5,490.6 L532.8,495.1 L532.5,499.7 L534.4,503.2 L537.6,505.7 L539.8,509.0 L542.1,512.2 L543.9,515.7 L543.5,520.4 L541.6,524.8 L544.6,527.8 L548.4,529.5 L552.1,531.3 L555.3,533.9 L556.7,537.6 L556.5,541.8 L558.7,545.3 L560.4,548.9 L560.3,553.1 L562.1,556.7 L565.7,557.9 L569.2,559.6 L573.3,558.6 L576.8,560.3 L580.4,561.3 L582.1,564.8 L584.3,567.8 L587.2,570.4 L588.3,576.1 L593.5,577.0 L598.6,576.1"/>
<path d="M464.0,593.2 L467.5,591.8 L471.3,591.9 L474.9,591.0 L478.6,590.8 L482.3,591.0 L486.3,591.3 L489.9,589.6 L493.8,589.6 L497.4,587.7 L501.4,588.0 L505.0,586.4 L508.5,588.0 L512.1,589.3 L515.1,592.0 L518.8,593.2 L520.3,597.0 L524.1,599.1 L525.5,602.9 L527.7,606.2 L530.2,609.2 L533.7,611.8 L536.5,615.1 L539.3,618.3"/>
<path d="M694.0,604.6 L693.9,608.4 L693.0,612.1 L692.1,615.7 L690.5,619.2 L689.9,622.9 L687.3,625.7 L685.8,629.4 L683.0,632.0 L678.4,633.1 L673.9,632.4 L669.3,632.0 L664.6,633.9 L660.2,636.6 L656.5,636.8 L652.9,636.1 L649.2,635.9 L645.7,634.1 L642.0,634.3 L637.4,636.5 L632.8,638.9 L632.8,643.2 L631.9,647.3 L630.3,651.2 L629.1,655.3 L628.3,659.4 L624.6,658.3 L620.5,658.7 L616.8,657.8 L613.2,655.9 L609.3,655.8 L605.5,654.8 L603.6,659.6 L600.9,664.0 L597.6,665.5 L593.7,665.3 L590.8,667.8 L587.2,668.5 L582.6,664.0 L583.9,660.6 L584.6,657.0 L585.9,653.7 L587.2,650.3 L582.6,645.7 L587.6,644.1 L591.8,641.1 L595.3,639.7 L597.3,636.3 L599.9,633.8 L603.2,632.0 L604.7,628.5 L604.5,624.7 L605.1,621.0 L607.9,617.9 L607.9,614.0 L609.7,610.7 L610.0,606.9"/>
<path d="M532.5,690.0 L536.2,688.5 L540.4,688.2 L543.9,686.0 L547.5,684.1 L551.2,682.5 L555.3,682.2 L559.0,681.9 L562.6,681.6 L566.3,681.8 L569.8,679.5 L573.5,680.0 L576.8,681.9 L580.5,683.1 L583.8,685.1 L587.2,686.8"/>
<path d="M694.0,602.4 L697.2,600.5 L700.7,599.6 L704.3,599.0 L708.0,598.7 L710.9,595.8 L714.5,595.5 L718.2,595.0 L721.4,593.2 L723.5,590.1 L723.1,586.1 L724.1,582.7 L726.0,579.5 L729.9,579.5 L733.5,578.7 L736.9,576.8 L740.3,574.9 L744.2,575.0 L747.6,572.6 L749.3,568.7 L752.9,566.4 L755.1,563.0 L758.1,560.2 L760.2,556.7 L764.1,555.1 L768.5,555.5 L772.4,553.4 L776.6,552.9 L780.7,552.2 L783.6,549.8 L785.8,547.0 L787.0,543.2 L789.8,540.8 L790.4,537.2 L791.9,533.9 L793.3,530.5 L794.4,527.1 L798.3,525.1 L802.1,522.9 L806.2,521.4 L810.4,520.2 L814.0,519.1 L817.6,518.0 L820.2,514.7 L824.1,514.3 L827.7,513.1 L830.9,511.1 L834.2,508.8 L838.4,509.1 L841.5,506.2 L845.5,505.9 L849.1,504.3 L852.9,504.0 L856.8,503.8 L860.5,502.7 L864.3,502.6 L868.2,502.6 L872.0,502.0 L874.5,499.2 L877.5,496.9 L879.9,493.9 L882.5,491.2 L884.5,487.9 L887.9,486.0"/>
<path d="M755.6,668.5 L758.5,665.9 L761.1,663.0 L763.4,659.9 L767.0,658.0 L769.3,654.8 L772.8,654.1 L775.8,652.1 L778.8,650.2 L782.3,649.5 L785.3,647.5 L788.5,646.2 L792.1,645.7 L795.9,645.3 L799.6,644.3 L803.5,644.8 L807.3,644.7 L811.0,643.4 L814.9,644.5 L818.6,643.0 L822.5,644.2 L826.3,643.4 L829.3,641.3 L831.4,638.4 L833.2,635.1 L836.4,633.3 L838.8,630.5 L842.2,628.9 L843.5,625.1 L847.1,623.7 L849.1,620.6 L852.8,621.7 L856.4,621.1 L860.1,621.3 L863.7,619.9 L867.4,620.6"/>
<path d="M817.2,664.0 L818.6,667.5 L821.8,669.7 L823.2,673.2 L826.3,675.4 L829.4,677.4 L833.4,677.0 L836.4,679.5 L840.0,680.0 L844.0,680.2 L847.4,677.5 L851.4,677.7 L853.4,680.6 L854.4,684.1 L857.2,686.6 L858.3,690.0"/>
<path d="M997.0,486.0 L993.0,487.0 L989.9,490.1 L985.8,490.8 L982.8,494.0 L978.8,495.1 L978.8,498.9 L977.9,502.7 L978.8,506.5 L978.9,510.6 L978.2,514.6 L977.1,518.5 L976.5,522.5 L973.3,526.2 L969.6,529.4 L969.4,533.7 L968.0,537.5 L966.9,541.5 L965.0,545.3 L962.0,547.4 L960.2,550.5 L957.5,553.0 L956.5,556.7 L953.7,559.0 L951.3,562.4 L950.8,566.7 L948.1,569.9 L946.1,573.5 L944.5,577.3 L943.4,581.0 L941.0,584.3 L940.3,588.2 L938.9,591.8 L937.7,595.5 L935.5,598.9 L935.8,603.1 L932.5,606.1 L931.9,610.0 L930.8,613.8 L927.5,616.2 L924.0,618.3"/>
<path d="M1029.0,527.1 L1031.5,530.6 L1035.4,532.8 L1038.0,536.2 L1038.7,540.6 L1041.3,544.3 L1043.5,548.1 L1044.9,552.2 L1047.8,555.0 L1051.4,556.7 L1054.9,558.5 L1057.4,561.8 L1060.9,563.6 L1062.6,567.2 L1061.7,571.3 L1063.7,574.9 L1063.7,578.9 L1063.7,582.8 L1065.5,586.4 L1069.1,588.4 L1072.6,590.4 L1076.6,591.5 L1080.6,592.7 L1083.7,595.5 L1087.2,597.5 L1089.7,600.4 L1091.7,603.9 L1094.8,606.4 L1097.4,609.2 L1100.3,611.8 L1102.7,615.1 L1106.7,616.4 L1109.5,619.2 L1111.8,622.5 L1115.7,624.1 L1117.9,627.5 L1121.1,630.3 L1122.8,634.1 L1125.5,637.2 L1127.1,641.1 L1130.0,643.2 L1132.9,645.2 L1135.1,648.1 L1137.7,650.4 L1141.0,652.1 L1143.1,655.0 L1146.0,657.1 L1149.1,658.8 L1150.7,662.4 L1154.0,664.0 L1157.1,666.3 L1160.0,668.8 L1162.8,671.3 L1164.7,674.9 L1167.6,677.3 L1169.8,680.1 L1172.7,682.1 L1176.0,683.7 L1178.9,685.6 L1181.3,688.2 L1185.0,689.1 L1187.5,692.1 L1190.8,693.8 L1194.2,695.2 L1197.1,697.6 L1200.4,699.1 L1204.0,699.4 L1207.5,701.0 L1211.2,701.0 L1215.0,700.4 L1218.5,702.2 L1222.2,701.8 L1225.6,703.8 L1227.6,707.3 L1230.5,709.9 L1233.1,712.8 L1236.6,714.6 L1240.0,716.5 L1242.3,720.1 L1246.5,721.0 L1249.0,724.2 L1252.2,726.4 L1256.1,728.0 L1260.5,727.0 L1264.6,727.8 L1268.6,729.1 L1272.2,729.6 L1275.9,729.6 L1279.5,730.1 L1283.1,730.7 L1286.8,729.6 L1290.4,730.5 L1293.9,730.9 L1297.3,731.8 L1300.9,732.1 L1303.8,734.7 L1307.3,735.4 L1310.8,736.1 L1314.5,735.4 L1317.7,737.3 L1320.9,738.9 L1324.4,739.5 L1328.0,739.8 L1331.2,741.2 L1334.8,741.4 L1338.3,741.8 L1341.8,742.4 L1345.0,744.1 L1348.6,744.1 L1352.2,744.3 L1355.6,745.5 L1359.0,747.0 L1362.5,747.5 L1366.0,748.4 L1369.6,748.2 L1371.9,752.6 L1375.0,756.4 L1373.4,760.1 L1370.8,763.2 L1369.0,766.7 L1366.8,770.1 L1362.4,772.3 L1358.6,775.5 L1357.9,779.6 L1357.8,783.8 L1356.3,787.7 L1355.9,791.9 L1356.0,796.0 L1358.7,799.4 L1358.4,803.6 L1361.3,806.9 L1361.4,811.0 L1364.9,812.2 L1368.2,813.8 L1370.9,816.4 L1374.0,818.4 L1377.7,819.2"/>
<path d="M1060.9,540.8 L1062.6,537.5 L1062.8,533.8 L1065.1,530.8 L1065.5,527.1 L1068.0,524.5 L1070.6,522.1 L1074.2,520.9 L1076.6,518.2 L1079.1,515.7 L1083.7,511.1"/>
<path d="M924.0,645.7 L927.7,647.2 L931.5,648.3 L935.1,650.1 L939.2,650.2 L942.8,652.1 L946.8,652.5 L950.5,653.7 L954.2,654.8 L958.2,654.7 L961.9,656.1 L965.8,656.5 L969.6,657.1 L973.4,657.1 L977.3,657.2 L981.0,658.5 L984.9,657.7 L988.5,659.9 L992.4,659.4 L996.0,660.0 L999.3,661.0 L1002.5,662.5 L1005.1,665.5 L1008.9,665.6 L1012.3,666.5 L1015.3,668.5 L1017.4,671.8 L1018.5,675.4 L1018.3,679.4 L1019.6,682.9 L1020.6,686.5 L1022.1,690.0"/>
<path d="M1261.2,486.0 L1257.7,487.4 L1255.3,490.5 L1251.5,491.3 L1248.5,493.5 L1245.2,495.1 L1241.6,496.1 L1238.4,497.7 L1235.0,499.2 L1232.6,502.5 L1228.6,502.5 L1225.2,504.1 L1222.4,506.5 L1219.1,508.6 L1218.0,512.7 L1215.3,515.3 L1212.9,518.2 L1210.5,521.1 L1206.6,522.7 L1204.2,525.6 L1201.9,528.6 L1199.6,531.6 L1195.5,531.5 L1191.6,532.5 L1187.7,533.8 L1183.7,533.9 L1179.9,535.9 L1175.9,537.1 L1171.5,536.8 L1167.7,538.5 L1166.4,542.2 L1164.2,545.5 L1162.1,548.8 L1161.0,552.7 L1158.7,555.8 L1156.3,559.0 L1159.0,561.9 L1160.5,565.7 L1163.4,568.4 L1165.7,571.6 L1167.7,575.0 L1168.6,579.1 L1171.3,582.3 L1172.5,586.3 L1174.7,589.7 L1176.8,593.2 L1180.3,594.5 L1182.6,597.3 L1185.4,599.5 L1187.8,602.2 L1191.3,603.6 L1193.6,606.4 L1196.7,608.2 L1199.6,610.3"/>
<path d="M1261.2,486.0 L1263.9,483.0 L1267.8,481.6 L1269.8,477.8 L1273.9,476.5 L1276.1,472.9 L1279.6,470.9 L1282.7,468.7 L1286.4,467.9 L1290.3,467.8 L1293.9,467.0 L1296.7,463.8 L1300.5,463.6 L1304.0,462.4 L1307.7,461.8 L1311.0,460.0 L1314.4,458.6 L1318.1,458.6 L1321.7,457.6 L1325.4,458.0 L1328.8,456.1 L1332.6,456.8 L1336.0,455.2"/>
<path d="M1281.7,610.0 L1282.6,613.7 L1283.1,617.4 L1282.5,621.3 L1283.4,625.0 L1284.6,628.7 L1283.9,632.5 L1285.5,636.1 L1285.0,640.0 L1282.5,642.8 L1280.7,646.0 L1278.6,649.0 L1277.2,652.5 L1273.7,653.1 L1270.4,654.5 L1267.0,655.3 L1263.6,656.2 L1259.9,656.0 L1256.9,658.6 L1253.0,657.7 L1249.8,659.4 L1247.3,662.9 L1243.8,665.3 L1240.5,668.0 L1236.4,669.6 L1233.8,673.0 L1233.2,677.6 L1232.7,682.2"/>
<path d="M1235.8,577.4 L1238.8,575.5 L1242.4,574.7 L1244.8,571.8 L1248.2,570.5 L1251.4,568.9 L1254.7,567.6 L1257.8,565.9 L1260.8,564.0 L1263.6,561.7 L1266.7,560.0 L1270.0,558.6 L1272.4,555.7 L1276.3,554.5 L1278.9,551.8 L1281.9,549.6 L1284.0,546.3 L1287.3,544.4 L1290.6,542.6 L1293.2,539.9 L1295.5,536.8 L1298.9,535.0 L1302.3,533.4 L1304.7,530.4 L1307.9,528.9 L1311.3,527.8 L1314.7,527.1 L1318.3,527.0 L1321.8,526.3 L1324.8,523.9 L1328.1,522.9 L1331.6,522.1 L1335.0,521.3 L1338.5,520.8 L1341.6,519.0 L1345.1,518.4 L1348.6,517.8 L1348.4,514.1 L1350.5,510.8 L1350.4,507.1 L1349.5,503.4 L1351.8,500.1 L1350.4,496.3 L1351.7,492.8 L1358.0,491.2 L1359.2,495.1 L1359.0,499.3 L1360.4,503.1 L1361.5,507.0 L1363.1,510.7 L1364.0,514.7 L1367.6,514.8 L1370.9,516.5 L1374.7,516.2 L1378.0,517.8"/>
<path d="M1348.6,517.8 L1350.5,521.2 L1351.5,524.9 L1353.6,528.2 L1354.2,532.1 L1354.7,536.0 L1356.3,539.5 L1358.0,543.0 L1359.8,546.6 L1361.3,550.3 L1363.4,553.7 L1365.8,556.9 L1366.7,561.0 L1368.9,564.3 L1370.5,568.0 L1370.4,572.0 L1370.4,575.9 L1371.8,579.7 L1371.9,583.7 L1371.9,587.6 L1373.0,591.5 L1373.8,595.3 L1373.6,599.3 L1371.4,602.6 L1369.4,605.9 L1367.9,609.5 L1366.3,613.0 L1364.2,616.3 L1362.8,620.0 L1361.2,623.5 L1359.8,627.2 L1358.0,630.6 L1354.5,632.5 L1350.6,633.5 L1347.3,636.1 L1343.4,637.0 L1339.4,637.9 L1336.0,640.0 L1334.9,643.9 L1334.5,648.0 L1334.7,652.1 L1333.8,656.0 L1333.0,660.0"/>
<path d="M1307.8,590.0 L1309.4,586.8 L1311.5,583.8 L1312.8,580.5 L1315.0,577.6 L1317.2,574.7 L1317.4,570.8 L1320.1,568.1 L1322.0,565.1 L1323.0,561.6 L1324.9,558.5 L1326.6,555.4"/>
<path d="M464.0,696.8 L468.0,697.1 L471.4,694.3 L475.4,694.6 L479.1,693.1 L483.1,693.7 L486.8,692.3 L490.7,692.9 L494.4,691.6 L498.1,690.3 L502.0,690.9 L505.8,690.5 L509.6,690.0"/>
<path d="M582.6,694.6 L587.0,697.3 L591.8,699.1 L595.3,698.9 L598.9,698.9 L602.5,699.1 L606.0,698.1 L609.5,697.6 L613.1,698.5 L616.6,696.7 L620.2,697.5 L623.7,696.8 L627.3,696.1 L631.1,696.5 L634.6,694.7 L638.5,696.1 L642.0,694.6"/>
<path d="M464.0,779.0 L467.7,777.9 L471.4,776.5 L475.4,776.7 L479.4,777.8 L483.1,779.6 L486.8,781.3 L490.9,778.0 L496.0,776.7 L500.5,775.8 L505.0,775.0 L509.6,774.4 L514.4,772.5 L518.8,769.9 L522.4,771.9 L525.6,774.4 L529.6,773.9 L533.6,773.8 L537.6,774.9 L541.6,774.4 L546.1,777.8 L550.1,778.6 L553.9,777.5 L557.8,776.7 L561.8,777.8 L565.7,776.8 L569.6,776.2 L573.5,776.7 L577.1,775.4 L580.9,776.4 L584.6,776.0 L588.2,775.2 L591.8,774.4 L595.4,773.9 L599.1,773.6 L602.6,772.4 L606.5,773.6 L610.0,772.1 L614.5,771.4 L619.2,771.7 L623.7,771.0 L627.6,771.1 L631.4,770.6 L635.1,769.2 L638.8,768.3 L642.7,768.3 L646.5,767.6 L650.3,767.2 L653.7,769.2 L657.5,768.7 L661.0,770.2 L664.8,769.9 L668.4,770.5 L671.7,771.9 L675.2,772.8 L678.5,774.4 L679.8,777.8 L681.4,781.0 L682.9,784.3 L683.0,788.1 L685.4,790.8 L688.8,792.3 L691.6,794.5 L694.0,797.2"/>
<path d="M482.3,781.3 L484.9,785.7 L486.8,790.4 L489.9,793.4 L493.0,796.4 L496.0,799.5 L500.1,799.8 L504.2,799.9 L508.3,799.2 L512.4,800.4 L516.5,799.5 L520.0,801.8 L524.5,801.7 L527.9,804.1"/>
<path d="M755.6,731.1 L758.8,732.9 L762.2,734.2 L765.7,735.1 L769.3,735.6 L771.6,740.2 L767.0,741.0 L762.4,740.2"/>
<path d="M849.1,690.0 L853.4,693.0 L858.3,694.6 L862.0,694.0 L865.3,691.7 L869.0,690.8 L873.1,691.9 L876.5,690.0 L877.9,693.6 L880.4,696.6 L882.4,699.9 L883.3,703.7 L887.4,704.5 L891.2,706.2 L894.8,708.3 L898.0,710.5 L901.8,711.4 L905.4,712.7 L908.5,715.1 L911.1,718.1 L914.3,720.2 L918.2,721.4 L920.4,724.9 L924.0,726.5"/>
<path d="M833.2,822.3 L834.1,827.0 L835.4,831.5 L838.9,832.4 L842.5,832.4 L846.0,833.1 L849.6,833.1 L853.1,833.5 L856.8,832.3 L860.3,833.6 L863.8,833.5 L867.4,833.7 L871.2,834.0 L874.9,833.2 L878.7,833.9 L882.4,833.0 L886.1,832.2 L889.8,831.9 L893.5,831.5 L897.3,832.1 L901.0,830.9 L904.8,831.6 L908.5,831.5 L912.4,830.7 L916.2,831.5 L920.1,831.5 L924.0,831.5"/>
<path d="M837.7,840.6 L840.9,842.5 L843.7,844.9 L847.8,845.1 L850.1,848.5 L853.7,849.7 L857.1,850.8 L860.5,852.1 L863.9,853.5 L867.4,854.3 L871.8,856.2 L876.5,856.6 L878.4,859.9 L880.1,863.3 L880.7,867.3 L883.3,870.2"/>
<path d="M716.8,868.0 L720.7,868.0 L724.0,870.1 L727.6,871.0 L731.6,870.6 L735.0,872.5 L737.1,875.4 L739.3,878.2 L741.2,881.3 L744.5,883.2 L746.5,886.2"/>
<path d="M924.0,742.5 L925.4,746.8 L928.5,750.1 L930.8,753.9 L934.6,755.4 L938.1,757.7 L942.3,758.4 L945.5,762.5 L946.8,767.6 L950.4,768.5 L954.0,768.8 L957.8,768.6 L961.3,770.2 L965.0,769.9 L966.4,773.8 L967.4,777.8 L968.4,781.8 L969.6,785.8 L972.8,788.1 L976.7,788.7 L979.9,790.8 L983.3,792.7 L986.0,795.2 L988.4,798.0 L990.6,801.0 L994.1,802.8 L995.9,806.2 L999.1,808.1 L1001.6,810.9 L1004.3,813.2 L1007.4,815.1 L1009.8,817.8 L1011.9,820.8 L1015.3,822.3 L1018.1,825.6 L1020.9,828.9 L1024.4,831.5 L1029.1,833.4 L1033.5,836.0 L1036.1,839.2 L1038.0,842.9 L1039.2,846.2 L1039.3,849.8 L1040.0,853.2 L1040.5,856.7 L1042.8,859.8 L1042.6,863.4 L1046.2,864.3 L1049.8,865.2 L1053.6,864.9 L1057.4,864.3 L1060.9,865.7 L1064.7,866.6 L1068.6,867.4 L1072.1,869.1 L1075.1,872.0 L1079.1,872.5 L1082.9,873.1 L1086.7,873.6 L1090.5,874.3 L1094.3,874.9 L1098.2,874.7 L1102.0,874.8 L1105.8,874.7 L1109.6,874.3 L1113.4,874.1 L1117.2,873.5 L1121.0,873.3 L1124.8,872.5 L1128.6,872.7 L1132.0,874.6 L1135.8,875.0 L1139.3,876.5 L1143.3,876.0 L1146.9,877.0 L1150.6,877.5 L1154.0,879.4"/>
<path d="M1024.4,690.0 L1026.7,693.2 L1029.2,696.1 L1032.3,698.5 L1035.5,700.8 L1038.0,703.7 L1041.0,705.7 L1044.3,706.9 L1047.8,707.7 L1051.3,708.4 L1054.5,709.8 L1057.7,711.3 L1060.9,712.8 L1063.1,715.6 L1064.8,718.8 L1066.3,722.1 L1067.7,725.5 L1071.2,727.5 L1072.3,731.1 L1075.1,733.5 L1078.6,734.9 L1081.4,737.3 L1083.7,740.2 L1084.9,744.1 L1087.2,747.6 L1088.3,751.5 L1091.1,754.7 L1092.8,758.4 L1096.5,758.7 L1099.4,760.8 L1102.5,762.5 L1105.5,764.6 L1108.7,766.0 L1112.4,766.2 L1115.6,767.6 L1118.1,770.9 L1120.9,774.0 L1122.2,778.1 L1124.8,781.3 L1128.7,782.6 L1132.4,784.3 L1136.2,785.8 L1139.8,787.6 L1143.0,790.4 L1146.7,790.8 L1150.3,789.6 L1154.0,790.4 L1157.2,792.3 L1161.0,791.2 L1164.0,793.8 L1167.9,793.1 L1171.3,793.7 L1174.4,796.0 L1178.0,795.9 L1181.3,797.3 L1184.8,797.8 L1188.3,796.6 L1191.8,796.3 L1195.3,797.9 L1198.8,797.8 L1202.3,798.1 L1205.8,797.3 L1206.7,801.1 L1209.4,804.3 L1209.6,808.3 L1210.8,812.1 L1212.7,815.5 L1214.0,819.2 L1210.8,821.3 L1209.5,825.0 L1205.9,826.7 L1203.8,829.8 L1202.5,833.6 L1200.1,836.3 L1196.6,838.1 L1193.9,840.6 L1192.6,844.4 L1189.5,846.5 L1188.5,850.3 L1186.3,853.6 L1186.1,857.7 L1183.3,860.8 L1182.7,864.7 L1181.3,868.3"/>
<path d="M1120.2,795.0 L1123.8,796.9 L1126.3,800.0 L1128.9,802.9 L1132.0,805.3 L1134.6,808.3 L1138.3,810.0 L1140.7,813.2 L1140.8,817.9 L1142.5,822.3 L1143.0,826.9 L1146.5,828.7 L1150.2,830.2 L1154.0,831.5"/>
<path d="M924.0,824.6 L927.8,824.4 L931.6,824.3 L935.4,824.6 L935.3,829.2 L936.5,833.7"/>
<path d="M1178.6,691.0 L1175.7,693.9 L1174.0,697.5 L1172.3,701.1 L1170.4,704.6 L1170.2,708.8 L1170.0,712.9 L1167.3,716.6 L1167.6,720.9"/>
<path d="M1274.0,650.0 L1270.7,651.3 L1267.5,652.8 L1265.0,655.4 L1261.6,656.6 L1258.2,657.6 L1255.3,659.6 L1252.5,661.7 L1249.5,663.6 L1246.4,665.6 L1243.0,667.0 L1239.3,667.8 L1236.5,670.4 L1233.1,671.8 L1232.7,675.9 L1233.1,680.0"/>
<path d="M1336.8,650.0 L1334.4,652.6 L1331.6,654.9 L1329.5,657.8 L1328.1,661.2 L1326.3,664.4 L1323.2,666.4 L1320.8,669.5 L1317.9,672.0 L1314.9,674.5 L1311.8,676.8 L1309.0,679.4 L1307.5,683.5 L1304.1,685.5 L1300.9,687.7 L1298.2,690.5 L1295.3,693.1 L1293.1,696.3 L1290.8,699.5 L1287.2,701.3 L1285.0,704.6"/>
<path d="M1154.0,830.0 L1158.5,830.7 L1163.1,830.4 L1167.6,830.0 L1169.8,832.9 L1173.3,834.1 L1176.4,835.9 L1178.5,838.9 L1181.3,841.0"/>
<path d="M1358.0,510.0 L1359.3,513.5 L1362.2,516.0 L1363.0,519.8 L1364.4,523.2 L1367.6,525.6 L1368.7,529.2 L1370.4,532.5 L1372.6,535.4 L1374.9,538.3 L1376.7,541.6 L1378.0,545.0"/>
</g>
<g fill="none" stroke="#d3d3d3" stroke-width="1.6" stroke-linejoin="round">
<path d="M464.0,101.5 L585.0,101.5 L601.0,110.0 L612.0,114.5 L644.0,105.4 L669.0,106.5 L694.0,110.0"/>
<path d="M464.0,156.7 L509.6,156.7 L532.5,153.3 L543.9,160.0 L571.2,171.5"/>
<path d="M464.0,176.8 L534.7,176.8"/>
<path d="M539.3,123.6 L535.9,144.2 L537.0,169.3 L539.3,183.0 L555.3,194.4 L569.0,202.3 L591.8,203.5 L619.0,202.3 L653.4,208.0 L669.3,204.6 L694.0,192.0"/>
<path d="M573.5,87.0 L573.5,160.0"/>
<path d="M554.9,300.0 L573.7,272.8 L575.2,232.0 L567.4,219.5"/>
<path d="M569.0,78.0 L569.0,89.4 L555.3,100.8 L543.9,114.5 L537.0,139.6"/>
<path d="M569.0,89.4 L585.0,100.8 L594.0,110.0 L601.0,114.5"/>
<path d="M585.0,100.8 L621.0,78.0"/>
<path d="M655.0,87.0 L646.0,101.0 L644.0,123.0"/>
<path d="M620.0,144.0 L622.0,165.0 L620.0,202.0"/>
<path d="M694.0,121.3 L728.2,112.2 L762.4,100.8 L785.3,105.4 L821.8,107.7 L853.7,106.5 L876.5,107.7 L924.0,105.4 L951.4,104.2 L969.6,94.0 L990.2,80.3 L992.4,78.0"/>
<path d="M694.0,176.1 L723.7,178.4 L792.1,178.4 L801.2,185.2 L858.3,187.5 L869.7,194.4 L924.0,194.4 L1017.5,193.2 L1031.2,192.0 L1035.8,196.6 L1083.7,197.8 L1154.0,201.2"/>
<path d="M748.8,228.6 L771.6,246.8 L773.9,260.5 L796.7,282.0"/>
<path d="M694.0,189.8 L716.8,180.7 L739.6,214.9 L748.8,228.6"/>
<path d="M815.0,78.0 L819.5,89.4 L820.6,123.6 L815.0,132.8"/>
<path d="M1102.0,78.0 L1100.8,96.3 L1106.5,119.0 L1102.0,139.6 L1098.5,162.4 L1083.7,183.0 L1080.3,196.6 L1081.4,214.9 L1075.7,224.0 L1076.9,282.0 L1076.9,295.7 L1079.1,316.2 L1070.0,339.0 L1063.2,357.3 L1063.2,405.2 L1056.3,430.3 L1056.3,455.4 L1060.9,486.0"/>
<path d="M1154.0,201.2 L1183.7,200.0 L1227.0,195.5 L1281.7,193.2 L1288.6,194.3"/>
<path d="M1280.6,192.0 L1280.6,181.8 L1288.6,180.6 L1370.7,180.6 L1370.7,78.0"/>
<path d="M1288.6,180.6 L1287.4,282.0 L1289.7,314.0 L1288.6,350.4 L1287.4,409.7 L1277.2,423.4 L1276.0,486.0"/>
<path d="M1350.2,180.6 L1341.0,224.0 L1313.7,246.8 L1306.8,282.0"/>
<path d="M1288.6,224.0 L1378.0,224.0"/>
<path d="M464.0,290.0 L475.4,292.3 L482.3,300.3 L493.7,302.5 L591.8,302.1 L596.3,296.8 L619.1,296.8 L623.7,299.1 L653.4,304.8 L694.0,306.0 L723.7,302.1 L826.3,301.4 L876.5,297.5 L899.3,299.8 L924.0,300.3 L985.6,300.3 L1017.5,304.4 L1065.5,308.2 L1088.3,311.7 L1154.0,314.0 L1167.7,311.7 L1183.7,307.1 L1208.7,302.5 L1233.8,303.0 L1240.7,306.0 L1378.0,306.0"/>
<path d="M564.4,282.0 L555.3,295.7 L553.0,316.2 L557.5,332.2 L563.2,355.0 L564.4,396.1 L569.0,414.3 L571.2,437.1 L578.1,457.7 L578.1,486.0 L578.1,522.5 L585.0,527.1 L598.6,531.6 L607.7,547.6 L607.7,554.4"/>
<path d="M464.0,345.9 L482.3,350.0 L518.8,350.0 L555.3,350.4 L573.5,366.4 L614.6,379.0 L632.8,379.0 L653.4,393.8 L683.0,406.3 L694.0,406.3 L737.3,402.9 L748.8,409.8 L757.9,421.2 L764.7,428.0 L794.4,437.1 L830.9,452.0 L872.0,457.7 L894.8,460.0 L924.0,473.7"/>
<path d="M853.7,302.5 L853.7,314.0 L867.4,327.6 L876.5,345.9 L885.6,359.6 L899.3,373.3 L917.6,393.8"/>
<path d="M801.2,282.0 L805.8,291.0 L805.8,300.3"/>
<path d="M981.0,302.5 L981.0,309.4 L990.2,320.8 L1003.8,336.8 L1007.3,355.0 L1008.4,368.7 L1019.8,391.5 L1022.1,409.8 L1029.0,418.9 L1030.0,455.4 L1033.5,486.0 L1044.9,513.4 L1060.9,549.9 L1067.7,572.7 L1095.1,600.1 L1122.5,627.5 L1127.1,645.7 L1127.1,690.0"/>
<path d="M924.0,406.3 L958.2,412.0 L965.0,423.5 L976.5,448.6 L999.3,464.5 L1019.8,480.5 L1024.4,486.0"/>
<path d="M1024.4,486.0 L1042.6,475.9 L1056.3,462.2 L1079.1,464.5 L1095.0,466.8 L1097.4,486.0 L1104.2,513.4"/>
<path d="M1154.0,478.2 L1176.8,469.0 L1195.1,462.2 L1217.9,457.6 L1240.7,441.7 L1268.0,434.8 L1284.0,425.7 L1336.5,407.5 L1368.4,381.2 L1378.0,381.2"/>
<path d="M1154.0,307.5 L1184.4,305.6 L1211.2,301.8 L1241.8,306.4"/>
<path d="M475.4,636.6 L491.4,657.1 L509.6,690.0"/>
<path d="M610.0,600.0 L623.7,638.9 L642.0,668.5"/>
<path d="M623.7,641.1 L626.0,690.0"/>
<path d="M464.0,684.5 L509.6,686.8 L578.1,684.5 L607.7,682.2 L642.0,680.0 L694.0,682.2"/>
<path d="M660.2,666.2 L669.3,661.7 L694.0,660.5"/>
<path d="M694.0,661.7 L751.0,666.2 L764.7,648.0 L785.3,643.4 L789.8,637.7 L815.0,635.4 L833.2,632.0 L849.1,620.6 L867.4,620.6"/>
<path d="M876.5,643.4 L858.3,690.0"/>
<path d="M903.9,643.4 L910.7,690.0"/>
<path d="M1026.7,486.0 L1015.3,495.1 L999.3,518.0 L992.4,536.2 L985.6,561.3 L976.5,577.3 L960.5,602.4 L956.0,613.8 L953.7,645.7 L937.7,668.5 L933.1,690.0"/>
<path d="M978.8,575.0 L999.3,579.5 L1038.0,578.4 L1051.8,565.9 L1065.5,561.3 L1092.8,543.0 L1104.2,522.5 L1106.5,513.4"/>
<path d="M1104.2,518.0 L1129.3,529.3 L1154.0,543.0 L1170.0,550.7"/>
<path d="M958.2,650.3 L992.4,649.1 L1129.3,648.0 L1154.0,645.7 L1170.0,641.6"/>
<path d="M1030.1,579.5 L1030.1,690.0"/>
<path d="M924.0,643.4 L946.8,645.7 L958.2,650.3"/>
<path d="M924.0,591.0 L951.4,554.4 L958.2,547.6 L992.4,540.8 L1003.8,520.2 L1019.8,488.3"/>
<path d="M1170.0,550.7 L1182.5,553.9 L1204.5,569.5 L1251.5,611.8 L1273.4,618.0 L1298.4,618.7 L1307.8,626.0 L1378.0,624.4"/>
<path d="M1275.0,615.0 L1289.0,599.3 L1311.0,593.0 L1378.0,591.5"/>
<path d="M1170.0,641.6 L1257.7,635.3 L1258.7,615.0"/>
<path d="M464.0,731.1 L477.7,726.5 L496.0,712.8 L505.1,706.0 L521.0,702.5 L555.3,703.7 L566.7,699.1 L591.8,694.6 L605.5,690.0"/>
<path d="M557.5,706.0 L600.9,785.8 L607.7,806.4 L626.0,813.2 L642.0,826.9 L646.5,849.7 L644.2,872.5 L637.4,894.0"/>
<path d="M623.7,845.1 L694.0,845.1 L830.9,842.9 L853.7,842.9 L867.4,840.6"/>
<path d="M924.0,701.4 L899.3,728.8 L876.5,763.0 L867.4,781.3 L868.6,849.7 L872.0,872.5 L868.6,894.0"/>
<path d="M830.9,801.8 L924.0,801.8 L1060.9,801.8 L1070.0,806.3 L1102.0,807.5 L1106.5,808.6 L1154.0,808.6 L1279.5,806.1"/>
<path d="M819.5,817.8 L835.4,836.0 L853.7,840.6"/>
<path d="M908.5,690.0 L922.2,735.6"/>
<path d="M892.5,858.8 L1154.0,860.0"/>
<path d="M1117.9,690.0 L1117.9,769.9 L1117.9,792.7 L1108.8,826.9 L1108.8,894.0"/>
<path d="M1083.7,881.6 L1097.4,865.7 L1108.8,865.7"/>
<path d="M1154.0,666.4 L1194.9,699.1 L1233.1,715.5 L1252.2,729.1 L1279.5,749.6 L1347.7,800.1"/>
<path d="M1276.8,650.0 L1276.8,761.9 L1280.9,767.3 L1280.9,894.0"/>
<path d="M1276.0,486.0 L1277.0,560.0 L1281.2,608.7 L1276.5,660.0"/>
</g>
<g fill="none" stroke="#d0d0d0" stroke-width="3.4" stroke-linejoin="round">
<path d="M464.0,132.8 L486.8,130.5 L518.8,144.2 L555.0,146.5 L573.5,148.7 L601.0,151.0 L612.3,144.2 L635.0,143.0 L694.0,143.0"/>
<path d="M475.0,290.0 L495.3,260.3 L498.5,229.0 L511.0,221.9 L529.8,208.6 L551.7,196.0 L569.0,178.8 L572.1,172.5"/>
<path d="M548.6,300.0 L558.0,269.7 L564.3,257.1 L569.0,222.7 L572.1,211.7 L572.1,160.0"/>
<path d="M572.1,197.6 L564.3,197.6 L561.1,213.3 L572.1,213.3"/>
<path d="M694.0,144.2 L728.2,141.9 L751.0,139.6 L773.9,144.2 L796.7,135.0 L821.8,131.6 L865.0,131.6 L924.0,131.6 L978.8,137.3 L990.2,131.6 L1049.5,130.0 L1088.3,133.9 L1102.0,140.0 L1113.4,141.9 L1124.8,151.0 L1154.0,168.1"/>
<path d="M694.0,146.5 L821.8,146.5 L862.8,145.3 L867.4,149.9 L924.0,151.0 L958.2,149.9 L1022.0,148.7 L1027.8,145.3 L1029.0,192.0 L1031.2,260.5 L1035.8,282.0 L1038.0,329.9 L1042.6,332.2 L1042.6,373.3 L1019.8,389.2 L924.0,453.0"/>
<path d="M732.8,155.6 L757.9,148.7 L773.9,132.8 L783.0,105.4 L780.7,78.0"/>
<path d="M757.9,148.7 L755.6,180.7 L748.8,205.8 L748.8,228.6 L751.0,282.0 L746.5,282.0 L739.6,327.6 L739.6,391.5 L737.3,428.0 L723.7,486.0 L724.8,622.9 L746.5,654.8 L753.3,664.0 L752.2,690.0 L752.2,785.8 L754.5,849.7 L753.3,877.1 L746.5,894.0"/>
<path d="M921.0,78.0 L921.0,282.0"/>
<path d="M924.0,205.8 L937.7,219.5 L945.7,233.1 L945.7,282.0"/>
<path d="M1154.0,173.8 L1165.4,183.0 L1179.1,198.9 L1217.9,202.3 L1240.7,208.0 L1268.0,206.9 L1304.5,212.6 L1350.2,214.9 L1378.0,226.3"/>
<path d="M903.9,400.6 L903.9,455.4 L894.8,464.5 L899.3,476.0 L924.0,486.0"/>
<path d="M901.6,486.0 L901.6,595.5"/>
<path d="M587.2,527.1 L578.1,559.0 L559.8,600.1 L557.5,616.0 L541.6,641.1 L530.2,675.4 L523.3,690.0 L514.2,719.7 L513.1,758.4 L513.1,894.0"/>
<path d="M662.5,486.0 L664.8,515.7 L669.3,531.6 L670.5,577.3 L664.8,645.7 L660.2,668.5"/>
<path d="M694.0,680.0 L716.8,673.1 L739.6,668.5 L755.6,664.0"/>
<path d="M626.0,690.0 L624.9,813.2 L632.8,826.9 L632.8,849.7 L624.9,872.5 L624.9,894.0"/>
<path d="M514.2,840.6 L516.5,838.3 L623.7,839.4"/>
<path d="M464.0,878.0 L550.7,877.1 L694.0,875.9 L739.6,874.8 L924.0,872.5"/>
<path d="M760.2,690.0 L799.0,744.8 L801.2,758.4 L814.9,785.8 L817.2,792.7"/>
<path d="M858.3,690.0 L858.3,712.8 L830.9,751.6 L817.2,790.4 L817.2,894.0"/>
<path d="M817.2,817.8 L789.8,872.5 L776.1,894.0"/>
<path d="M1029.0,690.0 L1029.0,731.1 L1035.8,742.5 L1037.0,894.0"/>
<path d="M943.4,747.0 L944.5,894.0"/>
<path d="M1279.5,806.1 L1293.2,805.5 L1295.9,800.1 L1347.7,800.1 L1378.0,800.1"/>
</g><g fill="none" stroke="#ffffff" stroke-width="1.4" stroke-linejoin="round">
<path d="M464.0,132.8 L486.8,130.5 L518.8,144.2 L555.0,146.5 L573.5,148.7 L601.0,151.0 L612.3,144.2 L635.0,143.0 L694.0,143.0"/>
<path d="M475.0,290.0 L495.3,260.3 L498.5,229.0 L511.0,221.9 L529.8,208.6 L551.7,196.0 L569.0,178.8 L572.1,172.5"/>
<path d="M548.6,300.0 L558.0,269.7 L564.3,257.1 L569.0,222.7 L572.1,211.7 L572.1,160.0"/>
<path d="M572.1,197.6 L564.3,197.6 L561.1,213.3 L572.1,213.3"/>
<path d="M694.0,144.2 L728.2,141.9 L751.0,139.6 L773.9,144.2 L796.7,135.0 L821.8,131.6 L865.0,131.6 L924.0,131.6 L978.8,137.3 L990.2,131.6 L1049.5,130.0 L1088.3,133.9 L1102.0,140.0 L1113.4,141.9 L1124.8,151.0 L1154.0,168.1"/>
<path d="M694.0,146.5 L821.8,146.5 L862.8,145.3 L867.4,149.9 L924.0,151.0 L958.2,149.9 L1022.0,148.7 L1027.8,145.3 L1029.0,192.0 L1031.2,260.5 L1035.8,282.0 L1038.0,329.9 L1042.6,332.2 L1042.6,373.3 L1019.8,389.2 L924.0,453.0"/>
<path d="M732.8,155.6 L757.9,148.7 L773.9,132.8 L783.0,105.4 L780.7,78.0"/>
<path d="M757.9,148.7 L755.6,180.7 L748.8,205.8 L748.8,228.6 L751.0,282.0 L746.5,282.0 L739.6,327.6 L739.6,391.5 L737.3,428.0 L723.7,486.0 L724.8,622.9 L746.5,654.8 L753.3,664.0 L752.2,690.0 L752.2,785.8 L754.5,849.7 L753.3,877.1 L746.5,894.0"/>
<path d="M921.0,78.0 L921.0,282.0"/>
<path d="M924.0,205.8 L937.7,219.5 L945.7,233.1 L945.7,282.0"/>
<path d="M1154.0,173.8 L1165.4,183.0 L1179.1,198.9 L1217.9,202.3 L1240.7,208.0 L1268.0,206.9 L1304.5,212.6 L1350.2,214.9 L1378.0,226.3"/>
<path d="M903.9,400.6 L903.9,455.4 L894.8,464.5 L899.3,476.0 L924.0,486.0"/>
<path d="M901.6,486.0 L901.6,595.5"/>
<path d="M587.2,527.1 L578.1,559.0 L559.8,600.1 L557.5,616.0 L541.6,641.1 L530.2,675.4 L523.3,690.0 L514.2,719.7 L513.1,758.4 L513.1,894.0"/>
<path d="M662.5,486.0 L664.8,515.7 L669.3,531.6 L670.5,577.3 L664.8,645.7 L660.2,668.5"/>
<path d="M694.0,680.0 L716.8,673.1 L739.6,668.5 L755.6,664.0"/>
<path d="M626.0,690.0 L624.9,813.2 L632.8,826.9 L632.8,849.7 L624.9,872.5 L624.9,894.0"/>
<path d="M514.2,840.6 L516.5,838.3 L623.7,839.4"/>
<path d="M464.0,878.0 L550.7,877.1 L694.0,875.9 L739.6,874.8 L924.0,872.5"/>
<path d="M760.2,690.0 L799.0,744.8 L801.2,758.4 L814.9,785.8 L817.2,792.7"/>
<path d="M858.3,690.0 L858.3,712.8 L830.9,751.6 L817.2,790.4 L817.2,894.0"/>
<path d="M817.2,817.8 L789.8,872.5 L776.1,894.0"/>
<path d="M1029.0,690.0 L1029.0,731.1 L1035.8,742.5 L1037.0,894.0"/>
<path d="M943.4,747.0 L944.5,894.0"/>
<path d="M1279.5,806.1 L1293.2,805.5 L1295.9,800.1 L1347.7,800.1 L1378.0,800.1"/>
</g>
<path d="M1183.5,163 L1362,157.5" stroke="#e3dce6" stroke-width="3" fill="none"/>
<path d="M1183.5,163 L1362,157.5" stroke="#bfb1c6" stroke-width="1.2" stroke-dasharray="8 6" fill="none"/>
<path d="M462.0,98.5 Q464.5,100.0 467.0,97.5 Q471,99.5 475.0,97.5 Q477.5,100.0 480.0,98.5 Q481.5,101.0 480.0,103.0 L480.5,109.0 Q480.0,112.0 471,113.0 Q462.0,112.0 461.5,109.0 L462.0,103.0 Q460.5,101.0 462.0,98.5 Z" fill="#fff" stroke="#7a7a7a" stroke-width="1.2"/><text x="471" y="109.6" text-anchor="middle" font-size="10" fill="#222">12</text>
<rect x="649.5" y="80.5" width="17" height="13" fill="#fff" stroke="#a8a8a8" stroke-width="1.2"/><text x="658" y="90.8" text-anchor="middle" font-size="10" fill="#222">62</text>
<path d="M958.0,127.0 Q967.5,128.5 977.0,127.0 L977.0,137.5 Q976.5,143.5 967.5,144.5 Q958.5,143.5 958.0,137.5 Z" fill="#fff" stroke="#5a5a5a" stroke-width="1.1"/><line x1="958.5" y1="130.5" x2="976.5" y2="130.5" stroke="#5a5a5a" stroke-width="1"/><text x="967.5" y="140.5" text-anchor="middle" font-size="10" fill="#222">80</text>
<path d="M1086.1,161.5 Q1095.6,163.0 1105.1,161.5 L1105.1,172.0 Q1104.6,178.0 1095.6,179.0 Q1086.6,178.0 1086.1,172.0 Z" fill="#fff" stroke="#5a5a5a" stroke-width="1.1"/><line x1="1086.6" y1="165.0" x2="1104.6" y2="165.0" stroke="#5a5a5a" stroke-width="1"/><text x="1095.6" y="175" text-anchor="middle" font-size="10" fill="#222">69</text>
<path d="M519.0,294.0 Q521.5,295.5 524.0,293.0 Q528,295.0 532.0,293.0 Q534.5,295.5 537.0,294.0 Q538.5,296.5 537.0,298.5 L537.5,304.5 Q537.0,307.5 528,308.5 Q519.0,307.5 518.5,304.5 L519.0,298.5 Q517.5,296.5 519.0,294.0 Z" fill="#fff" stroke="#7a7a7a" stroke-width="1.2"/><text x="528" y="305.1" text-anchor="middle" font-size="10" fill="#222">6</text>
<path d="M1066.0,302.5 Q1068.5,304.0 1071.0,301.5 Q1075,303.5 1079.0,301.5 Q1081.5,304.0 1084.0,302.5 Q1085.5,305.0 1084.0,307.0 L1084.5,313.0 Q1084.0,316.0 1075,317.0 Q1066.0,316.0 1065.5,313.0 L1066.0,307.0 Q1064.5,305.0 1066.0,302.5 Z" fill="#fff" stroke="#7a7a7a" stroke-width="1.2"/><text x="1075" y="313.6" text-anchor="middle" font-size="10" fill="#222">6</text>
<path d="M755.5,420.5 Q758.0,422.0 760.5,419.5 Q764.5,421.5 768.5,419.5 Q771.0,422.0 773.5,420.5 Q775.0,423.0 773.5,425.0 L774.0,431.0 Q773.5,434.0 764.5,435.0 Q755.5,434.0 755.0,431.0 L755.5,425.0 Q754.0,423.0 755.5,420.5 Z" fill="#fff" stroke="#7a7a7a" stroke-width="1.2"/><text x="764.5" y="431.6" text-anchor="middle" font-size="10" fill="#222">30</text>
<path d="M916.0,392.5 Q918.5,394.0 921.0,391.5 Q925,393.5 929.0,391.5 Q931.5,394.0 934.0,392.5 Q935.5,395.0 934.0,397.0 L934.5,403.0 Q934.0,406.0 925,407.0 Q916.0,406.0 915.5,403.0 L916.0,397.0 Q914.5,395.0 916.0,392.5 Z" fill="#fff" stroke="#7a7a7a" stroke-width="1.2"/><text x="925" y="403.6" text-anchor="middle" font-size="10" fill="#222">33</text>
<path d="M1227.0,187.5 Q1229.5,189.0 1232.0,186.5 Q1236,188.5 1240.0,186.5 Q1242.5,189.0 1245.0,187.5 Q1246.5,190.0 1245.0,192.0 L1245.5,198.0 Q1245.0,201.0 1236,202.0 Q1227.0,201.0 1226.5,198.0 L1227.0,192.0 Q1225.5,190.0 1227.0,187.5 Z" fill="#fff" stroke="#7a7a7a" stroke-width="1.2"/><text x="1236" y="198.6" text-anchor="middle" font-size="10" fill="#222">20</text>
<path d="M1350.1,205.5 Q1359.6,207.0 1369.1,205.5 L1369.1,216.0 Q1368.6,222.0 1359.6,223.0 Q1350.6,222.0 1350.1,216.0 Z" fill="#fff" stroke="#5a5a5a" stroke-width="1.1"/><line x1="1350.6" y1="209.0" x2="1368.6" y2="209.0" stroke="#5a5a5a" stroke-width="1"/><text x="1359.6" y="219" text-anchor="middle" font-size="10" fill="#222">80</text>
<path d="M1052.9,449.5 Q1062.4,451.0 1071.9,449.5 L1071.9,460.0 Q1071.4,466.0 1062.4,467.0 Q1053.4,466.0 1052.9,460.0 Z" fill="#fff" stroke="#5a5a5a" stroke-width="1.1"/><line x1="1053.4" y1="453.0" x2="1071.4" y2="453.0" stroke="#5a5a5a" stroke-width="1"/><text x="1062.4" y="463" text-anchor="middle" font-size="9" fill="#222">469</text>
<path d="M1042.2,557.8 Q1051.7,559.3 1061.2,557.8 L1061.2,568.3 Q1060.7,574.3 1051.7,575.3 Q1042.7,574.3 1042.2,568.3 Z" fill="#fff" stroke="#5a5a5a" stroke-width="1.1"/><line x1="1042.7" y1="561.3" x2="1060.7" y2="561.3" stroke="#5a5a5a" stroke-width="1"/><text x="1051.7" y="571.3" text-anchor="middle" font-size="9" fill="#222">469</text>
<path d="M976.5,550.2 Q986,551.7 995.5,550.2 L995.5,560.7 Q995.0,566.7 986,567.7 Q977.0,566.7 976.5,560.7 Z" fill="#fff" stroke="#5a5a5a" stroke-width="1.1"/><line x1="977.0" y1="553.7" x2="995.0" y2="553.7" stroke="#5a5a5a" stroke-width="1"/><text x="986" y="563.7" text-anchor="middle" font-size="10" fill="#222">69</text>
<path d="M1184.5,556.0 Q1187.0,557.5 1189.5,555.0 Q1193.5,557.0 1197.5,555.0 Q1200.0,557.5 1202.5,556.0 Q1204.0,558.5 1202.5,560.5 L1203.0,566.5 Q1202.5,569.5 1193.5,570.5 Q1184.5,569.5 1184.0,566.5 L1184.5,560.5 Q1183.0,558.5 1184.5,556.0 Z" fill="#fff" stroke="#7a7a7a" stroke-width="1.2"/><text x="1193.5" y="567.1" text-anchor="middle" font-size="10" fill="#222">30</text>
<path d="M813.8,628.3 Q816.3,629.8 818.8,627.3 Q822.8,629.3 826.8,627.3 Q829.3,629.8 831.8,628.3 Q833.3,630.8 831.8,632.8 L832.3,638.8 Q831.8,641.8 822.8,642.8 Q813.8,641.8 813.3,638.8 L813.8,632.8 Q812.3,630.8 813.8,628.3 Z" fill="#fff" stroke="#7a7a7a" stroke-width="1.2"/><text x="822.8" y="639.4" text-anchor="middle" font-size="10" fill="#222">24</text>
<path d="M1218.0,441.5 Q1220.5,443.0 1223.0,440.5 Q1227,442.5 1231.0,440.5 Q1233.5,443.0 1236.0,441.5 Q1237.5,444.0 1236.0,446.0 L1236.5,452.0 Q1236.0,455.0 1227,456.0 Q1218.0,455.0 1217.5,452.0 L1218.0,446.0 Q1216.5,444.0 1218.0,441.5 Z" fill="#fff" stroke="#7a7a7a" stroke-width="1.2"/><text x="1227" y="452.6" text-anchor="middle" font-size="10" fill="#222">24</text>
<path d="M461.0,624.5 Q463.5,626.0 466.0,623.5 Q470,625.5 474.0,623.5 Q476.5,626.0 479.0,624.5 Q480.5,627.0 479.0,629.0 L479.5,635.0 Q479.0,638.0 470,639.0 Q461.0,638.0 460.5,635.0 L461.0,629.0 Q459.5,627.0 461.0,624.5 Z" fill="#fff" stroke="#7a7a7a" stroke-width="1.2"/><text x="470" y="635.6" text-anchor="middle" font-size="10" fill="#222">35</text>
<path d="M641.6,669.5 Q644.1,671.0 646.6,668.5 Q650.6,670.5 654.6,668.5 Q657.1,671.0 659.6,669.5 Q661.1,672.0 659.6,674.0 L660.1,680.0 Q659.6,683.0 650.6,684.0 Q641.6,683.0 641.1,680.0 L641.6,674.0 Q640.1,672.0 641.6,669.5 Z" fill="#fff" stroke="#7a7a7a" stroke-width="1.2"/><text x="650.6" y="680.6" text-anchor="middle" font-size="10" fill="#222">31</text>
<rect x="505.5" y="743.5" width="17" height="13" fill="#fff" stroke="#a8a8a8" stroke-width="1.2"/><text x="514" y="753.8" text-anchor="middle" font-size="10" fill="#222">29</text>
<rect x="504.0" y="873.5" width="17" height="13" fill="#fff" stroke="#a8a8a8" stroke-width="1.2"/><text x="512.5" y="883.8" text-anchor="middle" font-size="10" fill="#222">29</text>
<rect x="743.5" y="835.0" width="17" height="13" fill="#fff" stroke="#a8a8a8" stroke-width="1.2"/><text x="752" y="845.3" text-anchor="middle" font-size="10" fill="#222">13</text>
<path d="M1231.4,715.5 Q1233.9,717.0 1236.4,714.5 Q1240.4,716.5 1244.4,714.5 Q1246.9,717.0 1249.4,715.5 Q1250.9,718.0 1249.4,720.0 L1249.9,726.0 Q1249.4,729.0 1240.4,730.0 Q1231.4,729.0 1230.9,726.0 L1231.4,720.0 Q1229.9,718.0 1231.4,715.5 Z" fill="#fff" stroke="#7a7a7a" stroke-width="1.2"/><text x="1240.4" y="726.6" text-anchor="middle" font-size="10" fill="#222">33</text>
<path d="M1311.0,585.0 Q1313.5,586.5 1316.0,584.0 Q1320,586.0 1324.0,584.0 Q1326.5,586.5 1329.0,585.0 Q1330.5,587.5 1329.0,589.5 L1329.5,595.5 Q1329.0,598.5 1320,599.5 Q1311.0,598.5 1310.5,595.5 L1311.0,589.5 Q1309.5,587.5 1311.0,585.0 Z" fill="#fff" stroke="#7a7a7a" stroke-width="1.2"/><text x="1320" y="596.1" text-anchor="middle" font-size="9" fill="#222">224</text>
<path d="M1100.0,843.0 Q1102.5,844.5 1105.0,842.0 Q1109,844.0 1113.0,842.0 Q1115.5,844.5 1118.0,843.0 Q1119.5,845.5 1118.0,847.5 L1118.5,853.5 Q1118.0,856.5 1109,857.5 Q1100.0,856.5 1099.5,853.5 L1100.0,847.5 Q1098.5,845.5 1100.0,843.0 Z" fill="#fff" stroke="#7a7a7a" stroke-width="1.2"/><text x="1109" y="854.1" text-anchor="middle" font-size="10" fill="#222">27</text>
<circle cx="572.4" cy="174.4" r="2.6" fill="#fff" stroke="#8a8a8a" stroke-width="1"/>
<circle cx="748.8" cy="228.6" r="2.6" fill="#fff" stroke="#8a8a8a" stroke-width="1"/>
<circle cx="1290" cy="284.5" r="2.6" fill="#fff" stroke="#8a8a8a" stroke-width="1"/>
<circle cx="1369.5" cy="392" r="2.6" fill="#fff" stroke="#8a8a8a" stroke-width="1"/>
<circle cx="623.7" cy="840" r="2.6" fill="#fff" stroke="#8a8a8a" stroke-width="1"/>
<text x="576.7" y="169.6" font-size="12" fill="#3d3d3d">South Bend</text>
<text x="694.5" y="163" font-size="12" fill="#3d3d3d">Elkhart</text>
<text x="752.3" y="223.6" font-size="12" fill="#3d3d3d">Goshen</text>
<text x="1292.7" y="283.8" font-size="12" fill="#3d3d3d">Bryan</text>
<text x="1373" y="388.6" font-size="12" fill="#3d3d3d">Defiance</text>
<text x="1046.4" y="505.5" font-size="12" fill="#3d3d3d">Fort Wayne</text>
<text x="894.3" y="614.6" font-size="11.2" fill="#3d3d3d">Huntington</text>
<text x="627.6" y="835.6" font-size="11" fill="#3d3d3d">Kokomo</text>
<text x="823" y="799.4" font-size="11" fill="#3d3d3d">Marion</text>
<text x="584" y="456.5" font-size="10.5" font-style="italic" fill="#7b6f55">1014 ft</text>
<path d="M579.0,463 L581.5,459 L584.0,463 Z" fill="#7b6f55"/>
<text x="652.5" y="592" font-size="10.5" font-style="italic" fill="#7b6f55">900 ft</text>
<path d="M646.8,598.7 L649.3,594.7 L651.8,598.7 Z" fill="#7b6f55"/>
<text x="833.6" y="744.8" font-size="10.5" font-style="italic" fill="#7b6f55">936 ft</text>
<path d="M828.6,751.8 L831.1,747.8 L833.6,751.8 Z" fill="#7b6f55"/>
<text x="578.1" y="785.8" font-size="14" letter-spacing="2.6" fill="#6e5f7e">Indiana</text>
<text transform="translate(795.5,260) rotate(25)" font-size="9.5" font-style="italic" fill="#5b92b6">Elkhart River</text>
<text transform="translate(874,495) rotate(-36)" font-size="9.5" font-style="italic" fill="#5b92b6">Eel River</text>
<text transform="translate(982,792) rotate(38)" font-size="10" font-style="italic" fill="#5b92b6">Salamonie River</text>
<text transform="translate(629,899) rotate(-14)" font-size="10" font-style="italic" fill="#5b92b6">Deer Creek</text>
<circle cx="586.3" cy="142.10000000000002" r="9.5" fill="#000" opacity="1" filter="url(#sh)"/>
<circle cx="582.5" cy="138.3" r="9.5" fill="url(#rg)"/>
<circle cx="587.3" cy="184.0" r="11.2" fill="#000" opacity="1" filter="url(#sh)"/>
<circle cx="583.5" cy="180.2" r="11.2" fill="url(#rg)"/>
<text x="583.5" y="184.5" text-anchor="middle" font-size="12" font-weight="bold" fill="#fff" stroke="#444" stroke-width="1.2" paint-order="stroke">11</text>
<circle cx="616.1999999999999" cy="187.4" r="10.8" fill="#000" opacity="1" filter="url(#sh)"/>
<circle cx="612.4" cy="183.6" r="10.8" fill="url(#rg)"/>
<text x="612.4" y="187.9" text-anchor="middle" font-size="12" font-weight="bold" fill="#fff" stroke="#444" stroke-width="1.2" paint-order="stroke">2</text>
<circle cx="654.3" cy="179.20000000000002" r="9.5" fill="#000" opacity="1" filter="url(#sh)"/>
<circle cx="650.5" cy="175.4" r="9.5" fill="url(#rg)"/>
<circle cx="687.9" cy="179.3" r="12.6" fill="#000" opacity="1" filter="url(#sh)"/>
<circle cx="684.1" cy="175.5" r="12.6" fill="url(#rg)"/>
<text x="684.1" y="179.8" text-anchor="middle" font-size="12" font-weight="bold" fill="#fff" stroke="#444" stroke-width="1.2" paint-order="stroke">30</text>
<circle cx="721.1999999999999" cy="205.4" r="10.8" fill="#000" opacity="1" filter="url(#sh)"/>
<circle cx="717.4" cy="201.6" r="10.8" fill="url(#rg)"/>
<text x="717.4" y="205.9" text-anchor="middle" font-size="12" font-weight="bold" fill="#fff" stroke="#444" stroke-width="1.2" paint-order="stroke">4</text>
<circle cx="809.4" cy="264.8" r="9.5" fill="#000" opacity="1" filter="url(#sh)"/>
<circle cx="805.6" cy="261" r="9.5" fill="url(#rg)"/>
<circle cx="1000.5" cy="308.8" r="10.9" fill="#000" opacity="1" filter="url(#sh)"/>
<circle cx="996.7" cy="305" r="10.9" fill="url(#rg)"/>
<text x="996.7" y="309.3" text-anchor="middle" font-size="12" font-weight="bold" fill="#fff" stroke="#444" stroke-width="1.2" paint-order="stroke">3</text>
<circle cx="1102.1" cy="316.8" r="10.9" fill="#000" opacity="1" filter="url(#sh)"/>
<circle cx="1098.3" cy="313" r="10.9" fill="url(#rg)"/>
<text x="1098.3" y="317.3" text-anchor="middle" font-size="12" font-weight="bold" fill="#fff" stroke="#444" stroke-width="1.2" paint-order="stroke">2</text>
<circle cx="1161.2" cy="317.8" r="10.8" fill="#000" opacity="1" filter="url(#sh)"/>
<circle cx="1157.4" cy="314" r="10.8" fill="url(#rg)"/>
<text x="1157.4" y="318.3" text-anchor="middle" font-size="12" font-weight="bold" fill="#fff" stroke="#444" stroke-width="1.2" paint-order="stroke">2</text>
<circle cx="1038.5" cy="517.1999999999999" r="13.6" fill="#000" opacity="1" filter="url(#sh)"/>
<circle cx="1034.7" cy="513.4" r="13.6" fill="url(#rg)"/>
<text x="1034.7" y="517.6999999999999" text-anchor="middle" font-size="12" font-weight="bold" fill="#fff" stroke="#444" stroke-width="1.2" paint-order="stroke">48</text>
<circle cx="1089.7" cy="515.9" r="11" fill="#000" opacity="1" filter="url(#sh)"/>
<circle cx="1085.9" cy="512.1" r="11" fill="url(#rg)"/>
<text x="1085.9" y="516.4" text-anchor="middle" font-size="12" font-weight="bold" fill="#fff" stroke="#444" stroke-width="1.2" paint-order="stroke">5</text>
<circle cx="893.8" cy="625.0" r="25" fill="#000" opacity="1" filter="url(#sh)"/>
<circle cx="890" cy="621.2" r="25" fill="url(#rg)"/>
<text x="890" y="625.5" text-anchor="middle" font-size="12" font-weight="bold" fill="#fff" stroke="#444" stroke-width="1.2" paint-order="stroke">244</text>
<circle cx="780.5999999999999" cy="657.3" r="9.4" fill="#000" opacity="1" filter="url(#sh)"/>
<circle cx="776.8" cy="653.5" r="9.4" fill="url(#rg)"/>
<circle cx="655.5999999999999" cy="692.0" r="10.8" fill="#000" opacity="1" filter="url(#sh)"/>
<circle cx="651.8" cy="688.2" r="10.8" fill="url(#rg)"/>
<text x="651.8" y="692.5" text-anchor="middle" font-size="12" font-weight="bold" fill="#fff" stroke="#444" stroke-width="1.2" paint-order="stroke">4</text>
<circle cx="825.6999999999999" cy="807.8" r="12.1" fill="#000" opacity="1" filter="url(#sh)"/>
<circle cx="821.9" cy="804" r="12.1" fill="url(#rg)"/>
<text x="821.9" y="808.3" text-anchor="middle" font-size="12" font-weight="bold" fill="#fff" stroke="#444" stroke-width="1.2" paint-order="stroke">25</text>
<circle cx="867.4" cy="805.1999999999999" r="9.5" fill="#000" opacity="1" filter="url(#sh)"/>
<circle cx="863.6" cy="801.4" r="9.5" fill="url(#rg)"/>
<g fill="none" stroke="#676767" stroke-width="2.1">
<path d="M464,126.5 L693,126.5 L693,127.5 L1182,127"/>
<path d="M653,127 L653,286 L654.5,286 L654.5,458"/>
<path d="M824,127 L824,454"/>
<path d="M482.5,287 L560,286.5 L654,286.5"/>
<path d="M482.5,286.5 L482.5,604.5"/>
<path d="M464,311.6 L482.5,311.6"/>
<path d="M464,188.8 L473.8,188.8 L473.8,235.3 L468.8,238.9 L468.8,257.7 L466,262 L464,262"/>
<path d="M654,310 L824,309.5"/>
<path d="M824,259.5 L1182,256.5"/>
<path d="M1018.5,127 L1018.5,406.5"/>
<path d="M1182.5,127 L1182.5,894"/>
<path d="M824,389 L873.5,389 L873.5,407 L1019,406.5 L1100,405.5 L1182,402.5"/>
<path d="M464,457.5 L656,457.5"/>
<path d="M646.5,457.5 L646.5,505.5 L671.5,505.5 L671.5,530.5 L811.5,529 L811.5,454 L825,454"/>
<path d="M811.5,528 L811.5,536 L813,538 L813,552.3 L958.5,551.5"/>
<path d="M970,407 L970,453.5 L958.5,453.5 L958.5,700 L960,710 L960,747"/>
<path d="M829.5,552 L829.5,747"/>
<path d="M958.5,599.5 L1182,599"/>
<path d="M1070.5,599.5 L1070.5,793"/>
<path d="M464,604.5 L608,604.5"/>
<path d="M608,555 L608,797"/>
<path d="M608,555.8 L653,555.8 L655,555 L702,555"/>
<path d="M701.6,530 L701.6,586 L702.8,588 L702.8,748"/>
<path d="M702.8,747.5 L960,746.8"/>
<path d="M911.3,747 L911.3,775 L912.4,777 L912.4,894"/>
<path d="M912,795.5 L940,795.5 L945,794 L1182,792.5"/>
<path d="M1015,794 L1015,841.5 L1013.5,841.5 L1013.5,894"/>
<path d="M464,725 L521,725 L521,870"/>
<path d="M521,798 L608,797.5 L694,796.5 L736.5,795.5 L736.5,894"/>
<path d="M464,870 L549,870 L549,894"/>
<path d="M577,894 L577,885.5 L736.5,884"/>
</g>
</svg>
<div class="btn" style="left:15px;top:15px"><svg width="32" height="32" viewBox="0 0 32 32"><path d="M9.5,23.5 L9.5,15 L8,16.3 L16,8.5 L24,16.3 L22.5,15 L22.5,23.5 L18,23.5 L18,18.5 L14,18.5 L14,23.5 Z M11,13.5 L11,9.5 L13,9.5 L13,11.5" fill="none" stroke="#333" stroke-width="1.3" stroke-linejoin="miter"/></svg></div>
<div class="btn" style="left:15px;top:57px"><svg width="32" height="32" viewBox="0 0 32 32"><circle cx="16" cy="16" r="5.5" fill="none" stroke="#333" stroke-width="1.3"/><path d="M16,8.5 V11 M16,21 V23.5 M8.5,16 H11 M21,16 H23.5" stroke="#333" stroke-width="1.3"/></svg></div>
<div class="btn" style="left:15px;top:99px;border-radius:50%"><svg width="32" height="32" viewBox="0 0 32 32"><path d="M16,5.5 L19.2,15.5 L12.8,15.5 Z" fill="#333"/><path d="M12.8,15.5 L19.2,15.5 L16,26 Z" fill="none" stroke="#333" stroke-width="1.1" stroke-linejoin="miter"/></svg></div>
<div class="btn" style="left:898px;top:15px;width:20px"><svg width="16" height="32" viewBox="0 0 16 32"><rect x="8.5" y="8.5" width="6.5" height="6.5" fill="none" stroke="#333" stroke-width="1.2"/><path d="M9.5,9.5 L14,14 M11,9.5 H9.5 V11 M12.5,14 H14 V12.5" stroke="#333" stroke-width="0.8" fill="none"/><rect x="8.5" y="17.5" width="6.5" height="6.5" fill="none" stroke="#333" stroke-width="1.2"/><path d="M8.5,21.5 H12 V18.5 H15" stroke="#333" stroke-width="1" fill="none"/></svg></div>
<div class="btn" style="left:898px;top:57px;width:20px"><svg width="16" height="32" viewBox="0 0 16 32"><path d="M9,11.5 H15 M9,11.5 L11.5,9 M9,11.5 L11.5,14" stroke="#333" stroke-width="1.2" fill="none"/><path d="M8.5,22.5 V16.5 H16 M8.5,22.5 H16 M10.5,22.5 V20 M12.5,22.5 V18.5 M14.5,22.5 V20" stroke="#333" stroke-width="1.3" fill="none"/></svg></div>
<div style="position:absolute;left:0;top:797.5px;width:80px;height:20px;border:2px solid #222;border-bottom:none;background:rgba(255,255,255,0.55)"><div style="position:absolute;left:5.5px;top:1.5px;font-size:12px;color:#222">10 mi</div></div>
<div style="position:absolute;left:378px;top:799px;width:536px;height:17px;background:rgba(255,255,255,0.6)"><div style="position:absolute;left:4px;top:1.5px;font-size:11.55px;color:#555;white-space:nowrap">Esri, CGIAR, USGS | Esri, TomTom, Garmin, SafeGraph, FAO, METI/NASA, USGS, EP...</div><div style="position:absolute;left:475px;top:1.5px;font-size:11.55px;color:#555;white-space:nowrap">Powered by Esri</div></div>
</div>
</body></html>
